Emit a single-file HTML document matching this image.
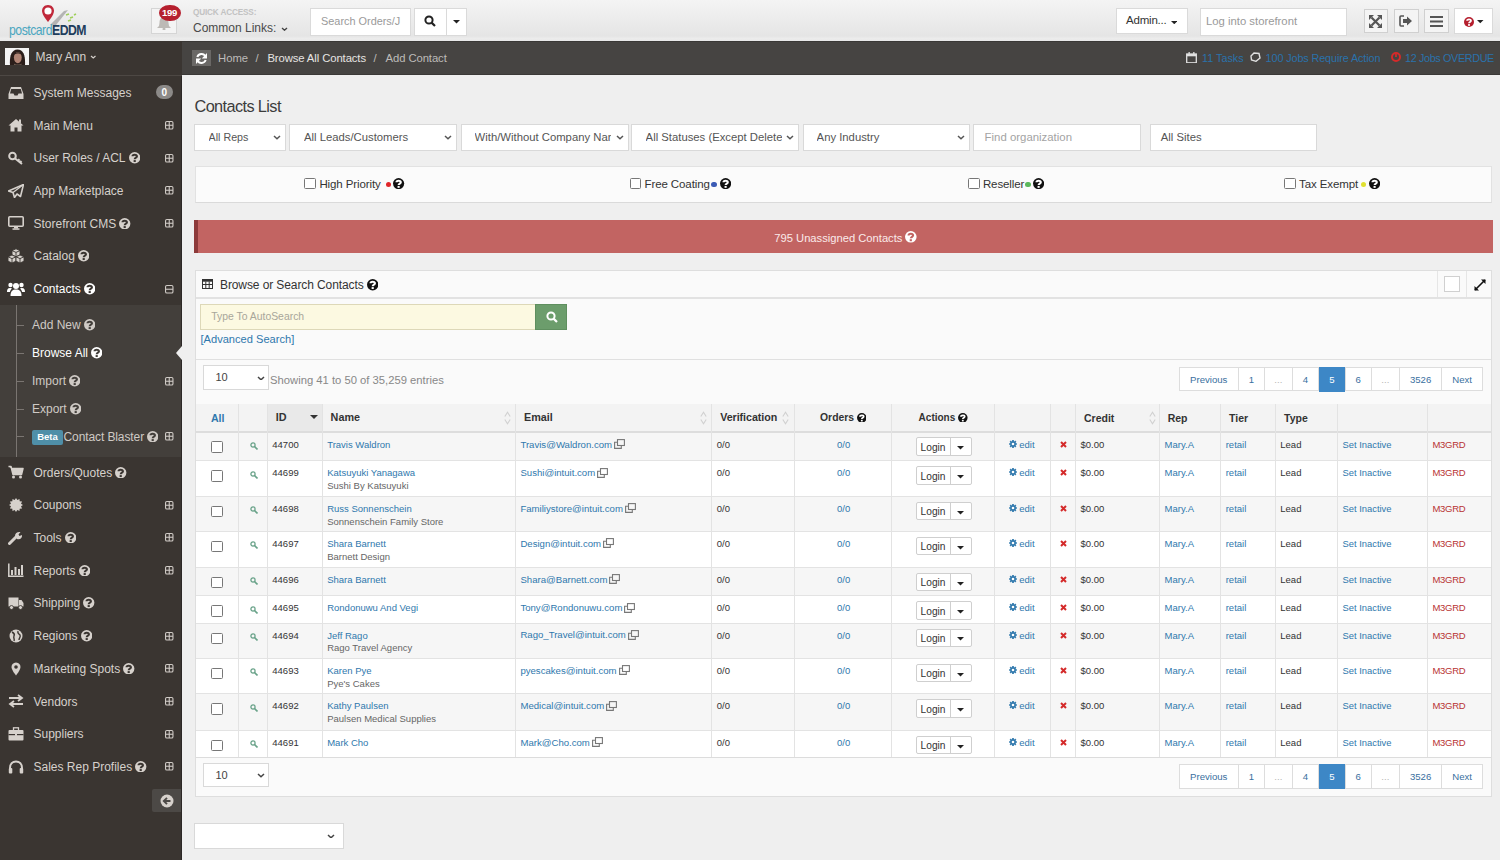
<!DOCTYPE html><html><head><meta charset="utf-8"><title>Contacts List</title><style>
html,body{margin:0;padding:0;width:1500px;height:860px;overflow:hidden;background:#efefef;font-family:"Liberation Sans", sans-serif;}
.t{position:absolute;line-height:1;white-space:nowrap;}
.r{position:absolute;box-sizing:border-box;}

</style></head><body>
<div class="r" style="left:0.00px;top:0.00px;width:1500.00px;height:40.70px;background:linear-gradient(#f4f4f4 0%,#e5e5e5 88%,#ececec 94%,#e8e8e8 100%);"></div>
<div class="r" style="left:0.00px;top:40.70px;width:181.50px;height:819.30px;background:#3a3531;"></div>
<div class="r" style="left:181.50px;top:40.70px;width:1318.50px;height:34.80px;background:#464442;border-top:1px solid #3a3836;border-bottom:1px solid #3b3937;"></div>
<svg class="r" style="left:40.00px;top:4.00px" width="16" height="20" viewBox="0 0 16 20"><path d="M8,1 C4,1 2,4 2,7 C2,11 8,18 8,18 C8,18 14,11 14,7 C14,4 12,1 8,1 Z" fill="#c0283a"/><circle cx="8" cy="7" r="3.6" fill="#fff"/></svg>
<svg class="r" style="left:48.00px;top:9.00px" width="30" height="17" viewBox="0 0 30 17"><path d="M2,16 L16,2 L20,1 L8,16 Z" fill="#a9a9a9" opacity="0.85"/><path d="M18,6 l3,-1 M22,9 l3,-1 M20,12 l3,-1 M26,6 l2,-1" stroke="#9fcf5a" stroke-width="1.6"/></svg>
<div class="t" style="left:9.00px;top:22.94px;font-size:14.6px;color:#333;font-weight:400;letter-spacing:-0.6px;transform:scaleX(0.84);transform-origin:0 0;"><span style="color:#4aa6c0">postcard</span><span style="color:#1e3d5c;font-weight:700">EDDM</span></div>
<div class="r" style="left:151.00px;top:8.00px;width:25.50px;height:25.50px;background:#f4f4f4;border:1px solid #d5d5d5;"></div>
<svg class="r" style="left:156.00px;top:16.00px" width="16" height="14" viewBox="0 0 16 14"><path d="M8,1 C4.5,1 3.5,4 3.5,7 L3,10 L1,12 L15,12 L13,10 L12.5,7 C12.5,4 11.5,1 8,1 Z" fill="#bdbab6"/><circle cx="8" cy="13" r="1.5" fill="#bdbab6"/></svg>
<div class="r" style="left:158.50px;top:4.50px;width:22.00px;height:16.50px;background:#b51f2e;border-radius:50%;"></div>
<div class="t" style="left:-130.50px;width:600px;text-align:center;top:8.46px;font-size:9.5px;color:#fff;font-weight:700;letter-spacing:-0.3px;">199</div>
<div class="t" style="left:193.00px;top:8.56px;font-size:8.2px;color:#c2c2c2;font-weight:700;letter-spacing:-0.15px;">QUICK ACCESS:</div>
<div class="t" style="left:193.00px;top:21.84px;font-size:12px;color:#4a4a4a;font-weight:400;letter-spacing:0px;">Common Links:</div>
<svg class="r" style="left:280.50px;top:27.00px" width="7" height="4.2" viewBox="0 0 7 4.2"><polyline points="1,1 3.5,3.2 6,1" fill="none" stroke="#444" stroke-width="1.4"/></svg>
<div class="r" style="left:310.00px;top:8.00px;width:100.50px;height:27.50px;background:#fff;border:1px solid #dadada;"></div>
<div class="t" style="left:321.00px;top:16.27px;font-size:10.9px;color:#9a9a9a;font-weight:400;letter-spacing:0px;">Search Orders/J</div>
<div class="r" style="left:413.50px;top:8.00px;width:53.00px;height:27.50px;background:#fff;border:1px solid #dadada;"></div>
<div class="r" style="left:445.50px;top:8.00px;width:1.00px;height:27.50px;background:#dadada;"></div>
<svg class="r" style="left:423.50px;top:15.00px" width="12" height="12" viewBox="0 0 12 12"><circle cx="5" cy="5" r="3.6" fill="none" stroke="#222" stroke-width="2"/><line x1="7.6" y1="7.6" x2="11" y2="11" stroke="#222" stroke-width="2.2"/></svg>
<svg class="r" style="left:452.50px;top:20.00px" width="7" height="4.0" viewBox="0 0 7 4.0"><polygon points="0,0 7,0 3.5,3.5" fill="#222"/></svg>
<div class="r" style="left:1115.50px;top:8.00px;width:72.00px;height:26.00px;background:#fff;border:1px solid #dadada;"></div>
<div class="t" style="left:1126.00px;top:15.26px;font-size:11.5px;color:#333;font-weight:400;letter-spacing:-0.2px;">Admin...</div>
<svg class="r" style="left:1170.50px;top:20.50px" width="6.5" height="3.75" viewBox="0 0 6.5 3.75"><polygon points="0,0 6.5,0 3.25,3.25" fill="#222"/></svg>
<div class="r" style="left:1199.50px;top:8.00px;width:147.00px;height:27.50px;background:#fff;border:1px solid #dadada;"></div>
<div class="t" style="left:1206.00px;top:16.43px;font-size:11.3px;color:#9a9a9a;font-weight:400;letter-spacing:0px;">Log into storefront</div>
<div class="r" style="left:1363.50px;top:8.50px;width:24.50px;height:24.50px;background:#f4f4f4;border:1px solid #d0d0d0;"></div>
<div class="r" style="left:1393.50px;top:8.50px;width:25.00px;height:24.50px;background:#f4f4f4;border:1px solid #d0d0d0;"></div>
<div class="r" style="left:1424.00px;top:8.50px;width:25.00px;height:24.50px;background:#f4f4f4;border:1px solid #d0d0d0;"></div>
<svg class="r" style="left:1369.00px;top:14.50px" width="13" height="13" viewBox="0 0 13 13"><path d="M2.5,2.5 L10.5,10.5 M10.5,2.5 L2.5,10.5" stroke="#555" stroke-width="2.2"/><polygon points="0,0 5,0 0,5" fill="#555"/><polygon points="13,0 8,0 13,5" fill="#555"/><polygon points="0,13 5,13 0,8" fill="#555"/><polygon points="13,13 8,13 13,8" fill="#555"/></svg>
<svg class="r" style="left:1399.00px;top:15.00px" width="14" height="12" viewBox="0 0 14 12"><path d="M5,1 L2,1 Q1,1 1,2 L1,10 Q1,11 2,11 L5,11" fill="none" stroke="#555" stroke-width="1.6"/><path d="M4,4 L8,4 L8,1.5 L13,6 L8,10.5 L8,8 L4,8 Z" fill="#555"/></svg>
<svg class="r" style="left:1430.00px;top:16.00px" width="13" height="11" viewBox="0 0 13 11"><rect x="0" y="0" width="13" height="2" fill="#555"/><rect x="0" y="4.5" width="13" height="2" fill="#555"/><rect x="0" y="9" width="13" height="2" fill="#555"/></svg>
<div class="r" style="left:1454.00px;top:8.00px;width:39.00px;height:26.00px;background:#fff;border:1px solid #dadada;"></div>
<svg class="r" style="left:1464.00px;top:16.50px" width="10" height="10" viewBox="0 0 10 10"><circle cx="5" cy="5" r="5" fill="#b51f2e"/><path d="M3.08,3.83 C3.08,2.00 7.00,1.83 7.00,3.75 C7.00,4.92 5.00,5.08 5.00,6.33" fill="none" stroke="#fff" stroke-width="1.80" stroke-linecap="butt"/><rect x="4.05" y="7.10" width="1.90" height="1.70" fill="#fff"/></svg>
<svg class="r" style="left:1477.00px;top:20.00px" width="6.5" height="3.75" viewBox="0 0 6.5 3.75"><polygon points="0,0 6.5,0 3.25,3.25" fill="#222"/></svg>
<div class="r" style="left:0.00px;top:74.50px;width:181.50px;height:1.00px;background:#4d4844;"></div>
<div class="r" style="left:5.00px;top:47.70px;width:24.00px;height:17.10px;background:#f4f4f4;"></div>
<svg class="r" style="left:5.00px;top:47.70px" width="24" height="17.1" viewBox="0 0 24 17.1"><path d="M5,17.1 C4.5,10 5.5,1.8 12.5,1.6 C19,1.8 20.5,9 20,17.1 Z" fill="#2b1e1a"/><ellipse cx="12.8" cy="9.6" rx="3.9" ry="5.6" fill="#b08474"/><path d="M9,15.5 C10,17 15.5,17 16.5,15.5 L16.5,17.1 L9,17.1 Z" fill="#6a5a50"/><path d="M8.8,7 C10,3.5 15.5,3.2 16.8,7 C15,5 11,5 8.8,7 Z" fill="#2b1e1a"/></svg>
<div class="t" style="left:35.50px;top:50.84px;font-size:12px;color:#d6d1cc;font-weight:400;letter-spacing:0px;">Mary Ann</div>
<svg class="r" style="left:90.00px;top:55.00px" width="6.5" height="3.9" viewBox="0 0 6.5 3.9"><polyline points="1,1 3.25,2.9 5.5,1" fill="none" stroke="#d6d1cc" stroke-width="1.2"/></svg>
<div class="r" style="left:0.00px;top:305.00px;width:181.50px;height:151.50px;background:#433f3b;"></div>
<div class="r" style="left:16.00px;top:305.00px;width:1.20px;height:151.50px;background:#7a7571;"></div>
<svg class="r" style="left:8.00px;top:85.50px" width="16" height="14" viewBox="0 0 16 14"><path d="M3,1 L13,1 L15.5,8 L15.5,13 L0.5,13 L0.5,8 Z" fill="#d6d1cc"/><path d="M3.2,3 L12.8,3 L14,7.5 L10.5,7.5 L9.5,9.5 L6.5,9.5 L5.5,7.5 L2,7.5 Z" fill="#3a3531"/></svg>
<div class="t" style="left:33.50px;top:86.84px;font-size:12px;color:#d6d1cc;font-weight:400;letter-spacing:0px;">System Messages</div>
<svg class="r" style="left:8.00px;top:118.20px" width="16" height="14" viewBox="0 0 16 14"><path d="M8,1 L15.5,7.5 L13.5,7.5 L13.5,13.5 L9.5,13.5 L9.5,9.5 L6.5,9.5 L6.5,13.5 L2.5,13.5 L2.5,7.5 L0.5,7.5 Z" fill="#d6d1cc"/><rect x="11" y="1.5" width="2" height="4" fill="#d6d1cc"/></svg>
<div class="t" style="left:33.50px;top:119.54px;font-size:12px;color:#d6d1cc;font-weight:400;letter-spacing:0px;">Main Menu</div>
<svg class="r" style="left:165.30px;top:120.90px" width="9" height="9" viewBox="0 0 9 9"><rect x="0.55" y="0.55" width="7.4" height="7.4" rx="1.3" fill="none" stroke="#cfcac5" stroke-width="1.1"/><line x1="0.55" y1="4.25" x2="7.95" y2="4.25" stroke="#cfcac5" stroke-width="1.1"/><line x1="4.25" y1="0.55" x2="4.25" y2="7.95" stroke="#cfcac5" stroke-width="1.1"/></svg>
<svg class="r" style="left:8.00px;top:151.00px" width="16" height="14" viewBox="0 0 16 14"><circle cx="4.5" cy="5" r="3.3" fill="none" stroke="#d6d1cc" stroke-width="2"/><path d="M6.8,7.3 L14,13 M10,9.8 L11.5,8.3 M12,11.5 L13.5,10" stroke="#d6d1cc" stroke-width="2"/></svg>
<div class="t" style="left:33.50px;top:152.34px;font-size:12px;color:#d6d1cc;font-weight:400;letter-spacing:0px;">User Roles / ACL<span style="display:inline-block;position:relative;width:14.40px;height:0"><svg style="position:absolute;left:3px;top:-10.00px" width="11.4" height="11.4" viewBox="0 0 11.4 11.4"><circle cx="5.7" cy="5.7" r="5.7" fill="#d6d1cc"/><path d="M3.52,4.37 C3.52,2.28 7.98,2.09 7.98,4.28 C7.98,5.61 5.70,5.79 5.70,7.22" fill="none" stroke="#3a3531" stroke-width="2.05" stroke-linecap="butt"/><rect x="4.62" y="8.09" width="2.17" height="1.94" fill="#3a3531"/></svg></span></div>
<svg class="r" style="left:165.30px;top:153.70px" width="9" height="9" viewBox="0 0 9 9"><rect x="0.55" y="0.55" width="7.4" height="7.4" rx="1.3" fill="none" stroke="#cfcac5" stroke-width="1.1"/><line x1="0.55" y1="4.25" x2="7.95" y2="4.25" stroke="#cfcac5" stroke-width="1.1"/><line x1="4.25" y1="0.55" x2="4.25" y2="7.95" stroke="#cfcac5" stroke-width="1.1"/></svg>
<svg class="r" style="left:8.00px;top:183.70px" width="16" height="14" viewBox="0 0 16 14"><path d="M15.5,0.5 L0.5,7 L5,8.5 L6.5,13.5 L9,10 L12.5,12.5 Z" fill="none" stroke="#d6d1cc" stroke-width="1.6" stroke-linejoin="round"/><path d="M5,8.5 L15.5,0.5" stroke="#d6d1cc" stroke-width="1.2"/></svg>
<div class="t" style="left:33.50px;top:185.04px;font-size:12px;color:#d6d1cc;font-weight:400;letter-spacing:0px;">App Marketplace</div>
<svg class="r" style="left:165.30px;top:186.40px" width="9" height="9" viewBox="0 0 9 9"><rect x="0.55" y="0.55" width="7.4" height="7.4" rx="1.3" fill="none" stroke="#cfcac5" stroke-width="1.1"/><line x1="0.55" y1="4.25" x2="7.95" y2="4.25" stroke="#cfcac5" stroke-width="1.1"/><line x1="4.25" y1="0.55" x2="4.25" y2="7.95" stroke="#cfcac5" stroke-width="1.1"/></svg>
<svg class="r" style="left:8.00px;top:216.40px" width="16" height="14" viewBox="0 0 16 14"><rect x="0.8" y="0.8" width="14.4" height="9.5" rx="1" fill="none" stroke="#d6d1cc" stroke-width="1.6"/><rect x="6" y="10.5" width="4" height="2" fill="#d6d1cc"/><rect x="4.5" y="12.3" width="7" height="1.5" fill="#d6d1cc"/></svg>
<div class="t" style="left:33.50px;top:217.74px;font-size:12px;color:#d6d1cc;font-weight:400;letter-spacing:0px;">Storefront CMS<span style="display:inline-block;position:relative;width:14.40px;height:0"><svg style="position:absolute;left:3px;top:-10.00px" width="11.4" height="11.4" viewBox="0 0 11.4 11.4"><circle cx="5.7" cy="5.7" r="5.7" fill="#d6d1cc"/><path d="M3.52,4.37 C3.52,2.28 7.98,2.09 7.98,4.28 C7.98,5.61 5.70,5.79 5.70,7.22" fill="none" stroke="#3a3531" stroke-width="2.05" stroke-linecap="butt"/><rect x="4.62" y="8.09" width="2.17" height="1.94" fill="#3a3531"/></svg></span></div>
<svg class="r" style="left:165.30px;top:219.10px" width="9" height="9" viewBox="0 0 9 9"><rect x="0.55" y="0.55" width="7.4" height="7.4" rx="1.3" fill="none" stroke="#cfcac5" stroke-width="1.1"/><line x1="0.55" y1="4.25" x2="7.95" y2="4.25" stroke="#cfcac5" stroke-width="1.1"/><line x1="4.25" y1="0.55" x2="4.25" y2="7.95" stroke="#cfcac5" stroke-width="1.1"/></svg>
<svg class="r" style="left:7.00px;top:248.10px" width="18" height="16" viewBox="0 0 18 16"><g stroke="#3a3531" stroke-width="0.9" stroke-linejoin="round"><path d="M9,0.8 L13,2.6 L13,7 L9,8.8 L5,7 L5,2.6 Z" fill="#d6d1cc"/><path d="M5,2.6 L9,4.4 L13,2.6 M9,4.4 L9,8.8" fill="none"/><path d="M5,7 L9,8.8 L9,13.2 L5,15 L1,13.2 L1,8.8 Z" fill="#d6d1cc"/><path d="M1,8.8 L5,10.6 L9,8.8 M5,10.6 L5,15" fill="none"/><path d="M13,7 L17,8.8 L17,13.2 L13,15 L9,13.2 L9,8.8 Z" fill="#d6d1cc"/><path d="M9,8.8 L13,10.6 L17,8.8 M13,10.6 L13,15" fill="none"/></g></svg>
<div class="t" style="left:33.50px;top:250.44px;font-size:12px;color:#d6d1cc;font-weight:400;letter-spacing:0px;">Catalog<span style="display:inline-block;position:relative;width:14.40px;height:0"><svg style="position:absolute;left:3px;top:-10.00px" width="11.4" height="11.4" viewBox="0 0 11.4 11.4"><circle cx="5.7" cy="5.7" r="5.7" fill="#d6d1cc"/><path d="M3.52,4.37 C3.52,2.28 7.98,2.09 7.98,4.28 C7.98,5.61 5.70,5.79 5.70,7.22" fill="none" stroke="#3a3531" stroke-width="2.05" stroke-linecap="butt"/><rect x="4.62" y="8.09" width="2.17" height="1.94" fill="#3a3531"/></svg></span></div>
<svg class="r" style="left:7.00px;top:280.80px" width="18" height="16" viewBox="0 0 18 16"><circle cx="9" cy="5" r="3" fill="#fff"/><path d="M3.5,15 C3.5,10 5.5,8.5 9,8.5 C12.5,8.5 14.5,10 14.5,15 Z" fill="#fff"/><circle cx="3.5" cy="4" r="2.2" fill="#fff"/><circle cx="14.5" cy="4" r="2.2" fill="#fff"/><path d="M0,11 C0,7.5 1.5,7 3.5,7 L5,7.5 C3.5,9 3,10 3,11 Z M18,11 C18,7.5 16.5,7 14.5,7 L13,7.5 C14.5,9 15,10 15,11 Z" fill="#fff"/></svg>
<div class="t" style="left:33.50px;top:283.14px;font-size:12px;color:#ffffff;font-weight:400;letter-spacing:0px;">Contacts<span style="display:inline-block;position:relative;width:14.40px;height:0"><svg style="position:absolute;left:3px;top:-10.00px" width="11.4" height="11.4" viewBox="0 0 11.4 11.4"><circle cx="5.7" cy="5.7" r="5.7" fill="#ffffff"/><path d="M3.52,4.37 C3.52,2.28 7.98,2.09 7.98,4.28 C7.98,5.61 5.70,5.79 5.70,7.22" fill="none" stroke="#3a3531" stroke-width="2.05" stroke-linecap="butt"/><rect x="4.62" y="8.09" width="2.17" height="1.94" fill="#3a3531"/></svg></span></div>
<svg class="r" style="left:165.30px;top:284.50px" width="9" height="9" viewBox="0 0 9 9"><rect x="0.55" y="0.55" width="7.4" height="7.4" rx="1.3" fill="none" stroke="#cfcac5" stroke-width="1.1"/><line x1="0.55" y1="4.25" x2="7.95" y2="4.25" stroke="#cfcac5" stroke-width="1.1"/></svg>
<svg class="r" style="left:8.00px;top:465.30px" width="16" height="14" viewBox="0 0 16 14"><path d="M0.5,1.5 L3,1.5 L5,9.5 L13.5,9.5 L15,3.5 L4,3.5" fill="#d6d1cc" stroke="#d6d1cc" stroke-width="1.5" stroke-linejoin="round"/><circle cx="5.5" cy="12" r="1.5" fill="#d6d1cc"/><circle cx="12.5" cy="12" r="1.5" fill="#d6d1cc"/></svg>
<div class="t" style="left:33.50px;top:466.64px;font-size:12px;color:#d6d1cc;font-weight:400;letter-spacing:0px;">Orders/Quotes<span style="display:inline-block;position:relative;width:14.40px;height:0"><svg style="position:absolute;left:3px;top:-10.00px" width="11.4" height="11.4" viewBox="0 0 11.4 11.4"><circle cx="5.7" cy="5.7" r="5.7" fill="#d6d1cc"/><path d="M3.52,4.37 C3.52,2.28 7.98,2.09 7.98,4.28 C7.98,5.61 5.70,5.79 5.70,7.22" fill="none" stroke="#3a3531" stroke-width="2.05" stroke-linecap="butt"/><rect x="4.62" y="8.09" width="2.17" height="1.94" fill="#3a3531"/></svg></span></div>
<svg class="r" style="left:8.00px;top:498.00px" width="16" height="14" viewBox="0 0 16 14"><polygon points="15.00,7.00 13.02,8.35 14.06,10.50 11.68,10.68 11.50,13.06 9.35,12.02 8.00,14.00 6.65,12.02 4.50,13.06 4.32,10.68 1.94,10.50 2.98,8.35 1.00,7.00 2.98,5.65 1.94,3.50 4.32,3.32 4.50,0.94 6.65,1.98 8.00,0.00 9.35,1.98 11.50,0.94 11.68,3.32 14.06,3.50 13.02,5.65" fill="#d6d1cc"/></svg>
<div class="t" style="left:33.50px;top:499.34px;font-size:12px;color:#d6d1cc;font-weight:400;letter-spacing:0px;">Coupons</div>
<svg class="r" style="left:165.30px;top:500.70px" width="9" height="9" viewBox="0 0 9 9"><rect x="0.55" y="0.55" width="7.4" height="7.4" rx="1.3" fill="none" stroke="#cfcac5" stroke-width="1.1"/><line x1="0.55" y1="4.25" x2="7.95" y2="4.25" stroke="#cfcac5" stroke-width="1.1"/><line x1="4.25" y1="0.55" x2="4.25" y2="7.95" stroke="#cfcac5" stroke-width="1.1"/></svg>
<svg class="r" style="left:8.00px;top:530.70px" width="16" height="14" viewBox="0 0 16 14"><path d="M1.5,12.5 L8,6" stroke="#d6d1cc" stroke-width="3" stroke-linecap="round"/><path d="M7,5 C7,2 9.5,0.5 12.5,1 L10.5,3.5 L11.5,5 L14,4 C14.5,7 12,9 9,8 Z" fill="#d6d1cc"/></svg>
<div class="t" style="left:33.50px;top:532.04px;font-size:12px;color:#d6d1cc;font-weight:400;letter-spacing:0px;">Tools<span style="display:inline-block;position:relative;width:14.40px;height:0"><svg style="position:absolute;left:3px;top:-10.00px" width="11.4" height="11.4" viewBox="0 0 11.4 11.4"><circle cx="5.7" cy="5.7" r="5.7" fill="#d6d1cc"/><path d="M3.52,4.37 C3.52,2.28 7.98,2.09 7.98,4.28 C7.98,5.61 5.70,5.79 5.70,7.22" fill="none" stroke="#3a3531" stroke-width="2.05" stroke-linecap="butt"/><rect x="4.62" y="8.09" width="2.17" height="1.94" fill="#3a3531"/></svg></span></div>
<svg class="r" style="left:165.30px;top:533.40px" width="9" height="9" viewBox="0 0 9 9"><rect x="0.55" y="0.55" width="7.4" height="7.4" rx="1.3" fill="none" stroke="#cfcac5" stroke-width="1.1"/><line x1="0.55" y1="4.25" x2="7.95" y2="4.25" stroke="#cfcac5" stroke-width="1.1"/><line x1="4.25" y1="0.55" x2="4.25" y2="7.95" stroke="#cfcac5" stroke-width="1.1"/></svg>
<svg class="r" style="left:8.00px;top:563.40px" width="16" height="14" viewBox="0 0 16 14"><path d="M0.8,0.5 L0.8,13.2 L15.5,13.2" fill="none" stroke="#d6d1cc" stroke-width="1.5"/><rect x="3" y="7" width="2" height="5" fill="#d6d1cc"/><rect x="6.5" y="4" width="2" height="8" fill="#d6d1cc"/><rect x="10" y="6" width="2" height="6" fill="#d6d1cc"/><rect x="13" y="2" width="2" height="10" fill="#d6d1cc"/></svg>
<div class="t" style="left:33.50px;top:564.74px;font-size:12px;color:#d6d1cc;font-weight:400;letter-spacing:0px;">Reports<span style="display:inline-block;position:relative;width:14.40px;height:0"><svg style="position:absolute;left:3px;top:-10.00px" width="11.4" height="11.4" viewBox="0 0 11.4 11.4"><circle cx="5.7" cy="5.7" r="5.7" fill="#d6d1cc"/><path d="M3.52,4.37 C3.52,2.28 7.98,2.09 7.98,4.28 C7.98,5.61 5.70,5.79 5.70,7.22" fill="none" stroke="#3a3531" stroke-width="2.05" stroke-linecap="butt"/><rect x="4.62" y="8.09" width="2.17" height="1.94" fill="#3a3531"/></svg></span></div>
<svg class="r" style="left:165.30px;top:566.10px" width="9" height="9" viewBox="0 0 9 9"><rect x="0.55" y="0.55" width="7.4" height="7.4" rx="1.3" fill="none" stroke="#cfcac5" stroke-width="1.1"/><line x1="0.55" y1="4.25" x2="7.95" y2="4.25" stroke="#cfcac5" stroke-width="1.1"/><line x1="4.25" y1="0.55" x2="4.25" y2="7.95" stroke="#cfcac5" stroke-width="1.1"/></svg>
<svg class="r" style="left:8.00px;top:596.10px" width="16" height="14" viewBox="0 0 16 14"><rect x="0.5" y="1.5" width="10" height="9" fill="#d6d1cc"/><path d="M11,4 L13.5,4 L15.5,7 L15.5,10.5 L11,10.5 Z" fill="#d6d1cc"/><circle cx="3.5" cy="11.5" r="2" fill="#d6d1cc" stroke="#3a3531" stroke-width="0.8"/><circle cx="12.5" cy="11.5" r="2" fill="#d6d1cc" stroke="#3a3531" stroke-width="0.8"/></svg>
<div class="t" style="left:33.50px;top:597.44px;font-size:12px;color:#d6d1cc;font-weight:400;letter-spacing:0px;">Shipping<span style="display:inline-block;position:relative;width:14.40px;height:0"><svg style="position:absolute;left:3px;top:-10.00px" width="11.4" height="11.4" viewBox="0 0 11.4 11.4"><circle cx="5.7" cy="5.7" r="5.7" fill="#d6d1cc"/><path d="M3.52,4.37 C3.52,2.28 7.98,2.09 7.98,4.28 C7.98,5.61 5.70,5.79 5.70,7.22" fill="none" stroke="#3a3531" stroke-width="2.05" stroke-linecap="butt"/><rect x="4.62" y="8.09" width="2.17" height="1.94" fill="#3a3531"/></svg></span></div>
<svg class="r" style="left:8.00px;top:628.80px" width="16" height="14" viewBox="0 0 16 14"><circle cx="8" cy="7" r="6.5" fill="#d6d1cc"/><path d="M4,3 C6,4 7,5 6,7 C5,9 7,10 6,12 M10,2 C9,4 11,5 12,6 C13,8 11,9 11,11" stroke="#3a3531" stroke-width="1.4" fill="none"/></svg>
<div class="t" style="left:33.50px;top:630.14px;font-size:12px;color:#d6d1cc;font-weight:400;letter-spacing:0px;">Regions<span style="display:inline-block;position:relative;width:14.40px;height:0"><svg style="position:absolute;left:3px;top:-10.00px" width="11.4" height="11.4" viewBox="0 0 11.4 11.4"><circle cx="5.7" cy="5.7" r="5.7" fill="#d6d1cc"/><path d="M3.52,4.37 C3.52,2.28 7.98,2.09 7.98,4.28 C7.98,5.61 5.70,5.79 5.70,7.22" fill="none" stroke="#3a3531" stroke-width="2.05" stroke-linecap="butt"/><rect x="4.62" y="8.09" width="2.17" height="1.94" fill="#3a3531"/></svg></span></div>
<svg class="r" style="left:165.30px;top:631.50px" width="9" height="9" viewBox="0 0 9 9"><rect x="0.55" y="0.55" width="7.4" height="7.4" rx="1.3" fill="none" stroke="#cfcac5" stroke-width="1.1"/><line x1="0.55" y1="4.25" x2="7.95" y2="4.25" stroke="#cfcac5" stroke-width="1.1"/><line x1="4.25" y1="0.55" x2="4.25" y2="7.95" stroke="#cfcac5" stroke-width="1.1"/></svg>
<svg class="r" style="left:8.00px;top:661.50px" width="16" height="14" viewBox="0 0 16 14"><path d="M8,0.5 C5,0.5 3.5,2.7 3.5,5 C3.5,8 8,13.5 8,13.5 C8,13.5 12.5,8 12.5,5 C12.5,2.7 11,0.5 8,0.5 Z" fill="#d6d1cc"/><circle cx="8" cy="5" r="1.8" fill="#3a3531"/></svg>
<div class="t" style="left:33.50px;top:662.84px;font-size:12px;color:#d6d1cc;font-weight:400;letter-spacing:0px;">Marketing Spots<span style="display:inline-block;position:relative;width:14.40px;height:0"><svg style="position:absolute;left:3px;top:-10.00px" width="11.4" height="11.4" viewBox="0 0 11.4 11.4"><circle cx="5.7" cy="5.7" r="5.7" fill="#d6d1cc"/><path d="M3.52,4.37 C3.52,2.28 7.98,2.09 7.98,4.28 C7.98,5.61 5.70,5.79 5.70,7.22" fill="none" stroke="#3a3531" stroke-width="2.05" stroke-linecap="butt"/><rect x="4.62" y="8.09" width="2.17" height="1.94" fill="#3a3531"/></svg></span></div>
<svg class="r" style="left:165.30px;top:664.20px" width="9" height="9" viewBox="0 0 9 9"><rect x="0.55" y="0.55" width="7.4" height="7.4" rx="1.3" fill="none" stroke="#cfcac5" stroke-width="1.1"/><line x1="0.55" y1="4.25" x2="7.95" y2="4.25" stroke="#cfcac5" stroke-width="1.1"/><line x1="4.25" y1="0.55" x2="4.25" y2="7.95" stroke="#cfcac5" stroke-width="1.1"/></svg>
<svg class="r" style="left:8.00px;top:694.20px" width="16" height="14" viewBox="0 0 16 14"><path d="M1,4 L13,4 M10,1 L14,4 L10,7 M15,10 L3,10 M6,7 L2,10 L6,13" fill="none" stroke="#d6d1cc" stroke-width="1.8"/></svg>
<div class="t" style="left:33.50px;top:695.54px;font-size:12px;color:#d6d1cc;font-weight:400;letter-spacing:0px;">Vendors</div>
<svg class="r" style="left:165.30px;top:696.90px" width="9" height="9" viewBox="0 0 9 9"><rect x="0.55" y="0.55" width="7.4" height="7.4" rx="1.3" fill="none" stroke="#cfcac5" stroke-width="1.1"/><line x1="0.55" y1="4.25" x2="7.95" y2="4.25" stroke="#cfcac5" stroke-width="1.1"/><line x1="4.25" y1="0.55" x2="4.25" y2="7.95" stroke="#cfcac5" stroke-width="1.1"/></svg>
<svg class="r" style="left:8.00px;top:726.90px" width="16" height="14" viewBox="0 0 16 14"><rect x="0.5" y="3" width="15" height="10.5" rx="1" fill="#d6d1cc"/><rect x="5.5" y="0.8" width="5" height="3" fill="none" stroke="#d6d1cc" stroke-width="1.3"/><rect x="0.5" y="7" width="15" height="1.2" fill="#3a3531"/><rect x="7" y="6.3" width="2" height="2.6" fill="#d6d1cc"/></svg>
<div class="t" style="left:33.50px;top:728.24px;font-size:12px;color:#d6d1cc;font-weight:400;letter-spacing:0px;">Suppliers</div>
<svg class="r" style="left:165.30px;top:729.60px" width="9" height="9" viewBox="0 0 9 9"><rect x="0.55" y="0.55" width="7.4" height="7.4" rx="1.3" fill="none" stroke="#cfcac5" stroke-width="1.1"/><line x1="0.55" y1="4.25" x2="7.95" y2="4.25" stroke="#cfcac5" stroke-width="1.1"/><line x1="4.25" y1="0.55" x2="4.25" y2="7.95" stroke="#cfcac5" stroke-width="1.1"/></svg>
<svg class="r" style="left:8.00px;top:759.60px" width="16" height="14" viewBox="0 0 16 14"><path d="M2,11 L2,8 C2,4 4.5,1.5 8,1.5 C11.5,1.5 14,4 14,8 L14,11" fill="none" stroke="#d6d1cc" stroke-width="2"/><rect x="0.8" y="8" width="3.5" height="5.5" rx="1" fill="#d6d1cc"/><rect x="11.7" y="8" width="3.5" height="5.5" rx="1" fill="#d6d1cc"/></svg>
<div class="t" style="left:33.50px;top:760.94px;font-size:12px;color:#d6d1cc;font-weight:400;letter-spacing:0px;">Sales Rep Profiles<span style="display:inline-block;position:relative;width:14.40px;height:0"><svg style="position:absolute;left:3px;top:-10.00px" width="11.4" height="11.4" viewBox="0 0 11.4 11.4"><circle cx="5.7" cy="5.7" r="5.7" fill="#d6d1cc"/><path d="M3.52,4.37 C3.52,2.28 7.98,2.09 7.98,4.28 C7.98,5.61 5.70,5.79 5.70,7.22" fill="none" stroke="#3a3531" stroke-width="2.05" stroke-linecap="butt"/><rect x="4.62" y="8.09" width="2.17" height="1.94" fill="#3a3531"/></svg></span></div>
<svg class="r" style="left:165.30px;top:762.30px" width="9" height="9" viewBox="0 0 9 9"><rect x="0.55" y="0.55" width="7.4" height="7.4" rx="1.3" fill="none" stroke="#cfcac5" stroke-width="1.1"/><line x1="0.55" y1="4.25" x2="7.95" y2="4.25" stroke="#cfcac5" stroke-width="1.1"/><line x1="4.25" y1="0.55" x2="4.25" y2="7.95" stroke="#cfcac5" stroke-width="1.1"/></svg>
<div class="r" style="left:155.50px;top:84.50px;width:17.50px;height:14.50px;background:#8c8a88;border-radius:8px;"></div>
<div class="t" style="left:-135.75px;width:600px;text-align:center;top:87.83px;font-size:10px;color:#fff;font-weight:700;letter-spacing:0px;">0</div>
<div class="r" style="left:17.00px;top:324.80px;width:6.50px;height:1.00px;background:#7a7571;"></div>
<div class="t" style="left:32.00px;top:319.44px;font-size:12px;color:#cfcac5;font-weight:400;letter-spacing:0px;">Add New<span style="display:inline-block;position:relative;width:14.40px;height:0"><svg style="position:absolute;left:3px;top:-10.00px" width="11.4" height="11.4" viewBox="0 0 11.4 11.4"><circle cx="5.7" cy="5.7" r="5.7" fill="#cfcac5"/><path d="M3.52,4.37 C3.52,2.28 7.98,2.09 7.98,4.28 C7.98,5.61 5.70,5.79 5.70,7.22" fill="none" stroke="#433f3b" stroke-width="2.05" stroke-linecap="butt"/><rect x="4.62" y="8.09" width="2.17" height="1.94" fill="#433f3b"/></svg></span></div>
<div class="r" style="left:17.00px;top:352.70px;width:6.50px;height:1.00px;background:#7a7571;"></div>
<div class="t" style="left:32.00px;top:347.34px;font-size:12px;color:#ffffff;font-weight:400;letter-spacing:0px;">Browse All<span style="display:inline-block;position:relative;width:14.40px;height:0"><svg style="position:absolute;left:3px;top:-10.00px" width="11.4" height="11.4" viewBox="0 0 11.4 11.4"><circle cx="5.7" cy="5.7" r="5.7" fill="#ffffff"/><path d="M3.52,4.37 C3.52,2.28 7.98,2.09 7.98,4.28 C7.98,5.61 5.70,5.79 5.70,7.22" fill="none" stroke="#433f3b" stroke-width="2.05" stroke-linecap="butt"/><rect x="4.62" y="8.09" width="2.17" height="1.94" fill="#433f3b"/></svg></span></div>
<div class="r" style="left:17.00px;top:380.60px;width:6.50px;height:1.00px;background:#7a7571;"></div>
<div class="t" style="left:32.00px;top:375.24px;font-size:12px;color:#cfcac5;font-weight:400;letter-spacing:0px;">Import<span style="display:inline-block;position:relative;width:14.40px;height:0"><svg style="position:absolute;left:3px;top:-10.00px" width="11.4" height="11.4" viewBox="0 0 11.4 11.4"><circle cx="5.7" cy="5.7" r="5.7" fill="#cfcac5"/><path d="M3.52,4.37 C3.52,2.28 7.98,2.09 7.98,4.28 C7.98,5.61 5.70,5.79 5.70,7.22" fill="none" stroke="#433f3b" stroke-width="2.05" stroke-linecap="butt"/><rect x="4.62" y="8.09" width="2.17" height="1.94" fill="#433f3b"/></svg></span></div>
<svg class="r" style="left:165.30px;top:376.60px" width="9" height="9" viewBox="0 0 9 9"><rect x="0.55" y="0.55" width="7.4" height="7.4" rx="1.3" fill="none" stroke="#cfcac5" stroke-width="1.1"/><line x1="0.55" y1="4.25" x2="7.95" y2="4.25" stroke="#cfcac5" stroke-width="1.1"/><line x1="4.25" y1="0.55" x2="4.25" y2="7.95" stroke="#cfcac5" stroke-width="1.1"/></svg>
<div class="r" style="left:17.00px;top:408.50px;width:6.50px;height:1.00px;background:#7a7571;"></div>
<div class="t" style="left:32.00px;top:403.14px;font-size:12px;color:#cfcac5;font-weight:400;letter-spacing:0px;">Export<span style="display:inline-block;position:relative;width:14.40px;height:0"><svg style="position:absolute;left:3px;top:-10.00px" width="11.4" height="11.4" viewBox="0 0 11.4 11.4"><circle cx="5.7" cy="5.7" r="5.7" fill="#cfcac5"/><path d="M3.52,4.37 C3.52,2.28 7.98,2.09 7.98,4.28 C7.98,5.61 5.70,5.79 5.70,7.22" fill="none" stroke="#433f3b" stroke-width="2.05" stroke-linecap="butt"/><rect x="4.62" y="8.09" width="2.17" height="1.94" fill="#433f3b"/></svg></span></div>
<div class="r" style="left:17.00px;top:436.40px;width:6.50px;height:1.00px;background:#7a7571;"></div>
<div class="r" style="left:32.00px;top:429.60px;width:31.00px;height:15.80px;background:#4f8fa8;border-radius:2px;"></div>
<div class="t" style="left:-252.50px;width:600px;text-align:center;top:432.46px;font-size:9.5px;color:#fff;font-weight:700;letter-spacing:0px;">Beta</div>
<div class="t" style="left:63.50px;top:431.04px;font-size:12px;color:#cfcac5;font-weight:400;letter-spacing:-0.1px;">Contact Blaster<span style="display:inline-block;position:relative;width:14.40px;height:0"><svg style="position:absolute;left:3px;top:-10.00px" width="11.4" height="11.4" viewBox="0 0 11.4 11.4"><circle cx="5.7" cy="5.7" r="5.7" fill="#cfcac5"/><path d="M3.52,4.37 C3.52,2.28 7.98,2.09 7.98,4.28 C7.98,5.61 5.70,5.79 5.70,7.22" fill="none" stroke="#433f3b" stroke-width="2.05" stroke-linecap="butt"/><rect x="4.62" y="8.09" width="2.17" height="1.94" fill="#433f3b"/></svg></span></div>
<svg class="r" style="left:165.30px;top:432.40px" width="9" height="9" viewBox="0 0 9 9"><rect x="0.55" y="0.55" width="7.4" height="7.4" rx="1.3" fill="none" stroke="#cfcac5" stroke-width="1.1"/><line x1="0.55" y1="4.25" x2="7.95" y2="4.25" stroke="#cfcac5" stroke-width="1.1"/><line x1="4.25" y1="0.55" x2="4.25" y2="7.95" stroke="#cfcac5" stroke-width="1.1"/></svg>
<div class="r" style="left:152.00px;top:789.00px;width:29.50px;height:22.50px;background:#4c4946;border-radius:2px 0 0 2px;"></div>
<svg class="r" style="left:159.50px;top:793.50px" width="14" height="14" viewBox="0 0 14 14"><circle cx="7" cy="7" r="6.5" fill="#d6d1cc"/><path d="M10.5,7 L4,7 M7,3.8 L3.8,7 L7,10.2" fill="none" stroke="#4c4946" stroke-width="1.9"/></svg>
<div class="r" style="left:180.50px;top:75.50px;width:1.00px;height:784.50px;background:#2c2826;"></div>
<svg class="r" style="left:175.50px;top:346.00px" width="6" height="14" viewBox="0 0 6 14"><polygon points="6,0 0,7 6,14" fill="#efefef"/></svg>
<div class="r" style="left:192.00px;top:49.50px;width:19.00px;height:16.50px;background:#6a6866;"></div>
<svg class="r" style="left:195.00px;top:51.50px" width="13" height="13" viewBox="0 0 13 13"><path d="M10.5,4.5 A4.5,4.5 0 0 0 2.3,5" fill="none" stroke="#fff" stroke-width="2"/><polygon points="12,1 12,6.5 6.8,6.5" fill="#fff"/><path d="M2.5,8.5 A4.5,4.5 0 0 0 10.7,8" fill="none" stroke="#fff" stroke-width="2"/><polygon points="1,12 1,6.5 6.2,6.5" fill="#fff"/></svg>
<div class="t" style="left:218.00px;top:52.83px;font-size:11.3px;color:#bdbbb9;font-weight:400;letter-spacing:0px;">Home</div>
<div class="t" style="left:255.50px;top:52.83px;font-size:11.3px;color:#bdbbb9;font-weight:400;letter-spacing:0px;">/</div>
<div class="t" style="left:267.40px;top:52.83px;font-size:11.3px;color:#e6e4e2;font-weight:400;letter-spacing:-0.1px;">Browse All Contacts</div>
<div class="t" style="left:373.50px;top:52.83px;font-size:11.3px;color:#bdbbb9;font-weight:400;letter-spacing:0px;">/</div>
<div class="t" style="left:385.60px;top:52.83px;font-size:11.3px;color:#bdbbb9;font-weight:400;letter-spacing:-0.1px;">Add Contact</div>
<svg class="r" style="left:1186.00px;top:51.50px" width="11" height="11.5" viewBox="0 0 11 11.5"><rect x="0.7" y="2" width="9.6" height="8.8" fill="none" stroke="#e0e0e0" stroke-width="1.3"/><rect x="0.7" y="2" width="9.6" height="2.3" fill="#e0e0e0"/><rect x="2.5" y="0" width="1.3" height="3" fill="#e0e0e0"/><rect x="7.2" y="0" width="1.3" height="3" fill="#e0e0e0"/></svg>
<div class="t" style="left:1202.00px;top:52.86px;font-size:10.8px;color:#2a72ab;font-weight:400;letter-spacing:0px;">11 Tasks</div>
<svg class="r" style="left:1249.50px;top:52.00px" width="11" height="10" viewBox="0 0 11 10"><path d="M1,4 L4,1 L9,1.5 L10,6 L6,9.3 L1.5,8 Z" fill="none" stroke="#e0e0e0" stroke-width="1.4"/></svg>
<div class="t" style="left:1265.60px;top:52.86px;font-size:10.8px;color:#2a72ab;font-weight:400;letter-spacing:-0.1px;">100 Jobs Require Action</div>
<svg class="r" style="left:1390.50px;top:52.00px" width="10" height="10" viewBox="0 0 10 10"><circle cx="5" cy="5" r="4" fill="none" stroke="#d42a2a" stroke-width="2"/><rect x="4.1" y="0" width="1.8" height="5" fill="#d42a2a"/></svg>
<div class="t" style="left:1405.00px;top:52.86px;font-size:10.8px;color:#2a72ab;font-weight:400;letter-spacing:-0.35px;">12 Jobs OVERDUE</div>
<div class="t" style="left:194.50px;top:98.20px;font-size:16.3px;color:#3c3c3c;font-weight:400;letter-spacing:-0.6px;">Contacts List</div>
<div class="r" style="left:194.40px;top:124.00px;width:92.00px;height:26.50px;background:#fff;border:1px solid #d9d9d9;"></div>
<div class="t" style="left:208.60px;top:132.44px;font-size:10.7px;color:#555;font-weight:400;letter-spacing:0px;width:60.30px;overflow:hidden;">All Reps</div>
<svg class="r" style="left:273.40px;top:134.80px" width="8" height="4.8" viewBox="0 0 8 4.8"><polyline points="1,1 4.0,3.8 7,1" fill="none" stroke="#555" stroke-width="1.5"/></svg>
<div class="r" style="left:289.40px;top:124.00px;width:167.20px;height:26.50px;background:#fff;border:1px solid #d9d9d9;"></div>
<div class="t" style="left:304.00px;top:131.93px;font-size:11.3px;color:#555;font-weight:400;letter-spacing:0px;width:135.10px;overflow:hidden;">All Leads/Customers</div>
<svg class="r" style="left:443.60px;top:134.80px" width="8" height="4.8" viewBox="0 0 8 4.8"><polyline points="1,1 4.0,3.8 7,1" fill="none" stroke="#555" stroke-width="1.5"/></svg>
<div class="r" style="left:460.60px;top:124.00px;width:168.00px;height:26.50px;background:#fff;border:1px solid #d9d9d9;"></div>
<div class="t" style="left:474.60px;top:131.93px;font-size:11.3px;color:#555;font-weight:400;letter-spacing:0px;width:136.50px;overflow:hidden;">With/Without Company Name</div>
<svg class="r" style="left:615.60px;top:134.80px" width="8" height="4.8" viewBox="0 0 8 4.8"><polyline points="1,1 4.0,3.8 7,1" fill="none" stroke="#555" stroke-width="1.5"/></svg>
<div class="r" style="left:631.40px;top:124.00px;width:167.70px;height:26.50px;background:#fff;border:1px solid #d9d9d9;"></div>
<div class="t" style="left:645.60px;top:131.93px;font-size:11.3px;color:#555;font-weight:400;letter-spacing:0px;width:136.00px;overflow:hidden;">All Statuses (Except Deletec</div>
<svg class="r" style="left:786.10px;top:134.80px" width="8" height="4.8" viewBox="0 0 8 4.8"><polyline points="1,1 4.0,3.8 7,1" fill="none" stroke="#555" stroke-width="1.5"/></svg>
<div class="r" style="left:802.70px;top:124.00px;width:167.70px;height:26.50px;background:#fff;border:1px solid #d9d9d9;"></div>
<div class="t" style="left:816.60px;top:131.93px;font-size:11.3px;color:#555;font-weight:400;letter-spacing:0px;width:136.30px;overflow:hidden;">Any Industry</div>
<svg class="r" style="left:957.40px;top:134.80px" width="8" height="4.8" viewBox="0 0 8 4.8"><polyline points="1,1 4.0,3.8 7,1" fill="none" stroke="#555" stroke-width="1.5"/></svg>
<div class="r" style="left:973.40px;top:124.00px;width:167.80px;height:26.50px;background:#fff;border:1px solid #d9d9d9;"></div>
<div class="t" style="left:984.60px;top:131.85px;font-size:11.4px;color:#a3a3a3;font-weight:400;letter-spacing:0px;">Find organization</div>
<div class="r" style="left:1149.70px;top:124.00px;width:167.80px;height:26.50px;background:#fff;border:1px solid #d9d9d9;"></div>
<div class="t" style="left:1160.80px;top:131.93px;font-size:11.3px;color:#555;font-weight:400;letter-spacing:0px;">All Sites</div>
<div class="r" style="left:194.60px;top:166.00px;width:1297.00px;height:37.00px;background:#fbfbfb;border:1px solid #e2e2e2;border-bottom-color:#dadada;"></div>
<div class="r" style="left:304.40px;top:177.60px;width:11.60px;height:11.60px;border:1.5px solid #777;border-radius:1.5px;background:#fff;"></div>
<div class="t" style="left:319.40px;top:178.56px;font-size:11.5px;color:#333;font-weight:400;letter-spacing:-0.1px;">High Priority</div>
<div class="r" style="left:385.50px;top:181.50px;width:5.60px;height:5.60px;background:#e0262a;border-radius:50%;"></div>
<svg class="r" style="left:393.40px;top:177.70px" width="11.2" height="11.2" viewBox="0 0 11.2 11.2"><circle cx="5.6" cy="5.6" r="5.6" fill="#111"/><path d="M3.45,4.29 C3.45,2.24 7.84,2.05 7.84,4.20 C7.84,5.51 5.60,5.69 5.60,7.09" fill="none" stroke="#fff" stroke-width="2.02" stroke-linecap="butt"/><rect x="4.54" y="7.95" width="2.13" height="1.90" fill="#fff"/></svg>
<div class="r" style="left:629.80px;top:177.60px;width:11.60px;height:11.60px;border:1.5px solid #777;border-radius:1.5px;background:#fff;"></div>
<div class="t" style="left:644.50px;top:178.56px;font-size:11.5px;color:#333;font-weight:400;letter-spacing:-0.1px;">Free Coating</div>
<div class="r" style="left:711.40px;top:181.50px;width:5.60px;height:5.60px;background:#3b5bb5;border-radius:50%;"></div>
<svg class="r" style="left:720.10px;top:177.70px" width="11.2" height="11.2" viewBox="0 0 11.2 11.2"><circle cx="5.6" cy="5.6" r="5.6" fill="#111"/><path d="M3.45,4.29 C3.45,2.24 7.84,2.05 7.84,4.20 C7.84,5.51 5.60,5.69 5.60,7.09" fill="none" stroke="#fff" stroke-width="2.02" stroke-linecap="butt"/><rect x="4.54" y="7.95" width="2.13" height="1.90" fill="#fff"/></svg>
<div class="r" style="left:968.20px;top:177.60px;width:11.60px;height:11.60px;border:1.5px solid #777;border-radius:1.5px;background:#fff;"></div>
<div class="t" style="left:982.90px;top:178.56px;font-size:11.5px;color:#333;font-weight:400;letter-spacing:-0.1px;">Reseller</div>
<div class="r" style="left:1025.20px;top:181.50px;width:5.60px;height:5.60px;background:#5cb85c;border-radius:50%;"></div>
<svg class="r" style="left:1032.90px;top:177.70px" width="11.2" height="11.2" viewBox="0 0 11.2 11.2"><circle cx="5.6" cy="5.6" r="5.6" fill="#111"/><path d="M3.45,4.29 C3.45,2.24 7.84,2.05 7.84,4.20 C7.84,5.51 5.60,5.69 5.60,7.09" fill="none" stroke="#fff" stroke-width="2.02" stroke-linecap="butt"/><rect x="4.54" y="7.95" width="2.13" height="1.90" fill="#fff"/></svg>
<div class="r" style="left:1284.30px;top:177.60px;width:11.60px;height:11.60px;border:1.5px solid #777;border-radius:1.5px;background:#fff;"></div>
<div class="t" style="left:1299.00px;top:178.56px;font-size:11.5px;color:#333;font-weight:400;letter-spacing:-0.1px;">Tax Exempt</div>
<div class="r" style="left:1360.70px;top:181.50px;width:5.60px;height:5.60px;background:#e0e030;border-radius:50%;"></div>
<svg class="r" style="left:1369.20px;top:177.70px" width="11.2" height="11.2" viewBox="0 0 11.2 11.2"><circle cx="5.6" cy="5.6" r="5.6" fill="#111"/><path d="M3.45,4.29 C3.45,2.24 7.84,2.05 7.84,4.20 C7.84,5.51 5.60,5.69 5.60,7.09" fill="none" stroke="#fff" stroke-width="2.02" stroke-linecap="butt"/><rect x="4.54" y="7.95" width="2.13" height="1.90" fill="#fff"/></svg>
<div class="r" style="left:194.00px;top:220.00px;width:1298.60px;height:33.00px;background:#c26462;border-left:4px solid #8d3a3a;"></div>
<div class="t" style="left:774.30px;top:232.52px;font-size:11.2px;color:#fbeaea;font-weight:400;letter-spacing:0px;">795 Unassigned Contacts</div>
<svg class="r" style="left:905.20px;top:231.00px" width="11.6" height="11.6" viewBox="0 0 11.6 11.6"><circle cx="5.8" cy="5.8" r="5.8" fill="#fff"/><path d="M3.58,4.45 C3.58,2.32 8.12,2.13 8.12,4.35 C8.12,5.70 5.80,5.90 5.80,7.35" fill="none" stroke="#c26462" stroke-width="2.09" stroke-linecap="butt"/><rect x="4.70" y="8.24" width="2.20" height="1.97" fill="#c26462"/></svg>
<div class="r" style="left:194.50px;top:270.00px;width:1297.50px;height:527.00px;background:#fafafa;border:1px solid #dedede;"></div>
<div class="r" style="left:195.50px;top:297.00px;width:1295.50px;height:2.00px;background:#e2e2e2;"></div>
<svg class="r" style="left:202.00px;top:279.00px" width="11" height="10" viewBox="0 0 11 10"><rect x="0.5" y="0.5" width="10" height="9" fill="none" stroke="#333" stroke-width="1"/><rect x="0.5" y="0.5" width="10" height="2.2" fill="#333"/><path d="M0.5,5.5 L10.5,5.5 M3.8,2.5 L3.8,9.5 M7.2,2.5 L7.2,9.5" stroke="#333" stroke-width="1"/></svg>
<div class="t" style="left:220.00px;top:279.34px;font-size:12px;color:#333;font-weight:400;letter-spacing:-0.1px;">Browse or Search Contacts<span style="display:inline-block;position:relative;width:14.90px;height:0"><svg style="position:absolute;left:3.5px;top:-10.00px" width="11.4" height="11.4" viewBox="0 0 11.4 11.4"><circle cx="5.7" cy="5.7" r="5.7" fill="#111"/><path d="M3.52,4.37 C3.52,2.28 7.98,2.09 7.98,4.28 C7.98,5.61 5.70,5.79 5.70,7.22" fill="none" stroke="#fff" stroke-width="2.05" stroke-linecap="butt"/><rect x="4.62" y="8.09" width="2.17" height="1.94" fill="#fff"/></svg></span></div>
<div class="r" style="left:1437.00px;top:271.00px;width:1.00px;height:26.00px;background:#e6e6e6;"></div>
<div class="r" style="left:1466.20px;top:271.00px;width:1.00px;height:26.00px;background:#e6e6e6;"></div>
<div class="r" style="left:1444.30px;top:276.00px;width:16.20px;height:16.20px;background:#fff;border:1.5px solid #d0d0d0;"></div>
<svg class="r" style="left:1473.50px;top:278.50px" width="12" height="12" viewBox="0 0 12 12"><path d="M1,11 L11,1" stroke="#111" stroke-width="1.6"/><polygon points="11.5,0.5 11.5,5 7,0.5" fill="#111"/><polygon points="0.5,11.5 0.5,7 5,11.5" fill="#111"/></svg>
<div class="r" style="left:200.00px;top:303.70px;width:335.50px;height:26.60px;background:#fcf9e1;border:1px solid #ddd8b8;"></div>
<div class="t" style="left:211.30px;top:311.69px;font-size:10.4px;color:#a8a69a;font-weight:400;letter-spacing:0px;">Type To AutoSearch</div>
<div class="r" style="left:535.30px;top:303.70px;width:31.50px;height:26.60px;background:#6c9d6c;border:1px solid #5f8f5f;"></div>
<svg class="r" style="left:545.50px;top:311.00px" width="12" height="12" viewBox="0 0 12 12"><circle cx="5" cy="5" r="3.6" fill="none" stroke="#fff" stroke-width="2"/><line x1="7.6" y1="7.6" x2="11" y2="11" stroke="#fff" stroke-width="2.2"/></svg>
<div class="t" style="left:200.50px;top:334.30px;font-size:11.1px;color:#2f78ad;font-weight:400;letter-spacing:0px;">[Advanced Search]</div>
<div class="r" style="left:195.50px;top:359.20px;width:1295.50px;height:1.30px;background:#e0e0e0;"></div>
<div class="r" style="left:203.30px;top:365.00px;width:66.20px;height:24.80px;background:#fff;border:1px solid #d9d9d9;"></div>
<div class="t" style="left:215.50px;top:372.19px;font-size:11px;color:#444;font-weight:400;letter-spacing:0px;">10</div>
<svg class="r" style="left:256.50px;top:375.50px" width="8" height="4.8" viewBox="0 0 8 4.8"><polyline points="1,1 4.0,3.8 7,1" fill="none" stroke="#444" stroke-width="1.5"/></svg>
<div class="t" style="left:270.00px;top:374.97px;font-size:11.25px;color:#888;font-weight:400;letter-spacing:0px;">Showing 41 to 50 of 35,259 entries</div>
<div class="r" style="left:1179.30px;top:367.10px;width:303.30px;height:24.20px;background:#fff;border:1px solid #dddddd;"></div>
<div class="t" style="left:908.75px;width:600px;text-align:center;top:375.17px;font-size:9.6px;color:#3a70a0;font-weight:400;letter-spacing:0px;">Previous</div>
<div class="r" style="left:1237.70px;top:367.10px;width:1.00px;height:24.20px;background:#dddddd;"></div>
<div class="t" style="left:951.35px;width:600px;text-align:center;top:375.17px;font-size:9.6px;color:#3a70a0;font-weight:400;letter-spacing:0px;">1</div>
<div class="r" style="left:1264.00px;top:367.10px;width:1.00px;height:24.20px;background:#dddddd;"></div>
<div class="t" style="left:978.35px;width:600px;text-align:center;top:375.17px;font-size:9.6px;color:#b5b5b5;font-weight:400;letter-spacing:0px;">...</div>
<div class="r" style="left:1291.70px;top:367.10px;width:1.00px;height:24.20px;background:#dddddd;"></div>
<div class="t" style="left:1005.50px;width:600px;text-align:center;top:375.17px;font-size:9.6px;color:#3a70a0;font-weight:400;letter-spacing:0px;">4</div>
<div class="r" style="left:1318.30px;top:367.10px;width:1.00px;height:24.20px;background:#dddddd;"></div>
<div class="r" style="left:1318.80px;top:366.60px;width:26.40px;height:25.20px;background:#3d87c6;"></div>
<div class="t" style="left:1032.00px;width:600px;text-align:center;top:375.17px;font-size:9.6px;color:#fff;font-weight:400;letter-spacing:0px;">5</div>
<div class="r" style="left:1344.70px;top:367.10px;width:1.00px;height:24.20px;background:#dddddd;"></div>
<div class="t" style="left:1058.15px;width:600px;text-align:center;top:375.17px;font-size:9.6px;color:#3a70a0;font-weight:400;letter-spacing:0px;">6</div>
<div class="r" style="left:1370.60px;top:367.10px;width:1.00px;height:24.20px;background:#dddddd;"></div>
<div class="t" style="left:1085.30px;width:600px;text-align:center;top:375.17px;font-size:9.6px;color:#b5b5b5;font-weight:400;letter-spacing:0px;">...</div>
<div class="r" style="left:1399.00px;top:367.10px;width:1.00px;height:24.20px;background:#dddddd;"></div>
<div class="t" style="left:1120.60px;width:600px;text-align:center;top:375.17px;font-size:9.6px;color:#3a70a0;font-weight:400;letter-spacing:0px;">3526</div>
<div class="r" style="left:1441.20px;top:367.10px;width:1.00px;height:24.20px;background:#dddddd;"></div>
<div class="t" style="left:1162.15px;width:600px;text-align:center;top:375.17px;font-size:9.6px;color:#3a70a0;font-weight:400;letter-spacing:0px;">Next</div>
<div class="r" style="left:195.50px;top:403.60px;width:1295.50px;height:28.10px;background:#f3f3f3;"></div>
<div class="r" style="left:267.00px;top:403.60px;width:55.70px;height:28.10px;background:#e9e9e9;"></div>
<div class="r" style="left:195.50px;top:431.70px;width:1295.50px;height:28.90px;background:#f6f6f6;"></div>
<div class="r" style="left:195.50px;top:460.60px;width:1295.50px;height:35.70px;background:#ffffff;"></div>
<div class="r" style="left:195.50px;top:496.30px;width:1295.50px;height:35.00px;background:#f6f6f6;"></div>
<div class="r" style="left:195.50px;top:531.30px;width:1295.50px;height:36.00px;background:#ffffff;"></div>
<div class="r" style="left:195.50px;top:567.30px;width:1295.50px;height:28.30px;background:#f6f6f6;"></div>
<div class="r" style="left:195.50px;top:595.60px;width:1295.50px;height:27.40px;background:#ffffff;"></div>
<div class="r" style="left:195.50px;top:623.00px;width:1295.50px;height:35.40px;background:#f6f6f6;"></div>
<div class="r" style="left:195.50px;top:658.40px;width:1295.50px;height:35.20px;background:#ffffff;"></div>
<div class="r" style="left:195.50px;top:693.60px;width:1295.50px;height:36.70px;background:#f6f6f6;"></div>
<div class="r" style="left:195.50px;top:730.30px;width:1295.50px;height:26.70px;background:#ffffff;"></div>
<div class="r" style="left:195.50px;top:430.70px;width:1295.50px;height:2.00px;background:#dddddd;"></div>
<div class="r" style="left:195.50px;top:460.10px;width:1295.50px;height:1.00px;background:#e3e3e3;"></div>
<div class="r" style="left:195.50px;top:495.80px;width:1295.50px;height:1.00px;background:#e3e3e3;"></div>
<div class="r" style="left:195.50px;top:530.80px;width:1295.50px;height:1.00px;background:#e3e3e3;"></div>
<div class="r" style="left:195.50px;top:566.80px;width:1295.50px;height:1.00px;background:#e3e3e3;"></div>
<div class="r" style="left:195.50px;top:595.10px;width:1295.50px;height:1.00px;background:#e3e3e3;"></div>
<div class="r" style="left:195.50px;top:622.50px;width:1295.50px;height:1.00px;background:#e3e3e3;"></div>
<div class="r" style="left:195.50px;top:657.90px;width:1295.50px;height:1.00px;background:#e3e3e3;"></div>
<div class="r" style="left:195.50px;top:693.10px;width:1295.50px;height:1.00px;background:#e3e3e3;"></div>
<div class="r" style="left:195.50px;top:729.80px;width:1295.50px;height:1.00px;background:#e3e3e3;"></div>
<div class="r" style="left:195.50px;top:756.50px;width:1295.50px;height:1.50px;background:#dcdcdc;"></div>
<div class="r" style="left:237.50px;top:403.60px;width:1.00px;height:353.40px;background:#e3e3e3;"></div>
<div class="r" style="left:266.50px;top:403.60px;width:1.00px;height:353.40px;background:#e3e3e3;"></div>
<div class="r" style="left:322.20px;top:403.60px;width:1.00px;height:353.40px;background:#e3e3e3;"></div>
<div class="r" style="left:514.90px;top:403.60px;width:1.00px;height:353.40px;background:#e3e3e3;"></div>
<div class="r" style="left:711.00px;top:403.60px;width:1.00px;height:353.40px;background:#e3e3e3;"></div>
<div class="r" style="left:793.80px;top:403.60px;width:1.00px;height:353.40px;background:#e3e3e3;"></div>
<div class="r" style="left:891.30px;top:403.60px;width:1.00px;height:353.40px;background:#e3e3e3;"></div>
<div class="r" style="left:994.00px;top:403.60px;width:1.00px;height:353.40px;background:#e3e3e3;"></div>
<div class="r" style="left:1049.70px;top:403.60px;width:1.00px;height:353.40px;background:#e3e3e3;"></div>
<div class="r" style="left:1074.80px;top:403.60px;width:1.00px;height:353.40px;background:#e3e3e3;"></div>
<div class="r" style="left:1158.90px;top:403.60px;width:1.00px;height:353.40px;background:#e3e3e3;"></div>
<div class="r" style="left:1219.80px;top:403.60px;width:1.00px;height:353.40px;background:#e3e3e3;"></div>
<div class="r" style="left:1275.10px;top:403.60px;width:1.00px;height:353.40px;background:#e3e3e3;"></div>
<div class="r" style="left:1337.20px;top:403.60px;width:1.00px;height:353.40px;background:#e3e3e3;"></div>
<div class="r" style="left:1426.90px;top:403.60px;width:1.00px;height:353.40px;background:#e3e3e3;"></div>
<div class="t" style="left:210.90px;top:412.52px;font-size:10.6px;color:#2f78ad;font-weight:700;letter-spacing:0px;">All</div>
<div class="t" style="left:275.70px;top:412.36px;font-size:10.8px;color:#333;font-weight:700;letter-spacing:0px;">ID</div>
<svg class="r" style="left:309.50px;top:415.30px" width="8" height="4.5" viewBox="0 0 8 4.5"><polygon points="0,0 8,0 4.0,4.0" fill="#333"/></svg>
<div class="t" style="left:330.60px;top:412.36px;font-size:10.8px;color:#333;font-weight:700;letter-spacing:0px;">Name</div>
<svg class="r" style="left:504.00px;top:410.50px" width="7" height="14" viewBox="0 0 7 14"><polyline points="0.8,5.5 3.5,1.2 6.2,5.5" fill="none" stroke="#d0d0d0" stroke-width="1.1"/><polyline points="0.8,8.5 3.5,12.8 6.2,8.5" fill="none" stroke="#d0d0d0" stroke-width="1.1"/></svg>
<div class="t" style="left:524.00px;top:412.36px;font-size:10.8px;color:#333;font-weight:700;letter-spacing:0px;">Email</div>
<svg class="r" style="left:699.50px;top:410.50px" width="7" height="14" viewBox="0 0 7 14"><polyline points="0.8,5.5 3.5,1.2 6.2,5.5" fill="none" stroke="#d0d0d0" stroke-width="1.1"/><polyline points="0.8,8.5 3.5,12.8 6.2,8.5" fill="none" stroke="#d0d0d0" stroke-width="1.1"/></svg>
<div class="t" style="left:720.20px;top:412.44px;font-size:10.7px;color:#333;font-weight:700;letter-spacing:-0.05px;">Verification</div>
<svg class="r" style="left:782.00px;top:410.50px" width="7" height="14" viewBox="0 0 7 14"><polyline points="0.8,5.5 3.5,1.2 6.2,5.5" fill="none" stroke="#d0d0d0" stroke-width="1.1"/><polyline points="0.8,8.5 3.5,12.8 6.2,8.5" fill="none" stroke="#d0d0d0" stroke-width="1.1"/></svg>
<div class="t" style="left:820.00px;top:412.69px;font-size:10.4px;color:#333;font-weight:700;letter-spacing:0px;">Orders</div>
<svg class="r" style="left:856.70px;top:412.80px" width="9.6" height="9.6" viewBox="0 0 9.6 9.6"><circle cx="4.8" cy="4.8" r="4.8" fill="#111"/><path d="M2.96,3.68 C2.96,1.92 6.72,1.76 6.72,3.60 C6.72,4.72 4.80,4.88 4.80,6.08" fill="none" stroke="#fff" stroke-width="1.73" stroke-linecap="butt"/><rect x="3.89" y="6.82" width="1.82" height="1.63" fill="#fff"/></svg>
<div class="t" style="left:918.60px;top:413.03px;font-size:10px;color:#333;font-weight:700;letter-spacing:0px;">Actions</div>
<svg class="r" style="left:958.00px;top:412.80px" width="9.6" height="9.6" viewBox="0 0 9.6 9.6"><circle cx="4.8" cy="4.8" r="4.8" fill="#111"/><path d="M2.96,3.68 C2.96,1.92 6.72,1.76 6.72,3.60 C6.72,4.72 4.80,4.88 4.80,6.08" fill="none" stroke="#fff" stroke-width="1.73" stroke-linecap="butt"/><rect x="3.89" y="6.82" width="1.82" height="1.63" fill="#fff"/></svg>
<div class="t" style="left:1084.00px;top:412.61px;font-size:10.5px;color:#333;font-weight:700;letter-spacing:0px;">Credit</div>
<svg class="r" style="left:1148.50px;top:410.50px" width="7" height="14" viewBox="0 0 7 14"><polyline points="0.8,5.5 3.5,1.2 6.2,5.5" fill="none" stroke="#d0d0d0" stroke-width="1.1"/><polyline points="0.8,8.5 3.5,12.8 6.2,8.5" fill="none" stroke="#d0d0d0" stroke-width="1.1"/></svg>
<div class="t" style="left:1167.70px;top:412.61px;font-size:10.5px;color:#333;font-weight:700;letter-spacing:0px;">Rep</div>
<div class="t" style="left:1229.00px;top:412.61px;font-size:10.5px;color:#333;font-weight:700;letter-spacing:0px;">Tier</div>
<div class="t" style="left:1284.00px;top:412.61px;font-size:10.5px;color:#333;font-weight:700;letter-spacing:0px;">Type</div>
<div class="r" style="left:211.00px;top:441.20px;width:11.50px;height:11.50px;border:1.6px solid #777;border-radius:1.5px;background:#fff;"></div>
<svg class="r" style="left:249.50px;top:441.70px" width="8" height="8" viewBox="0 0 8 8"><circle cx="3" cy="3" r="2.1" fill="none" stroke="#6aa38a" stroke-width="1.3"/><line x1="4.5" y1="4.5" x2="7.5" y2="7.5" stroke="#6aa38a" stroke-width="1.6"/></svg>
<div class="t" style="left:272.30px;top:440.06px;font-size:9.5px;color:#333;font-weight:400;letter-spacing:0px;">44700</div>
<div class="t" style="left:327.20px;top:440.06px;font-size:9.5px;color:#2f78ad;font-weight:400;letter-spacing:0px;">Travis Waldron</div>
<div class="t" style="left:520.40px;top:439.97px;font-size:9.6px;color:#2f78ad;font-weight:400;letter-spacing:0px;">Travis@Waldron.com<span style="display:inline-block;position:relative;width:13px;height:0"><svg style="position:absolute;left:2px;top:-8.5px" width="11" height="10" viewBox="0 0 11 10"><rect x="3.5" y="0.6" width="6.9" height="5.9" fill="none" stroke="#777" stroke-width="1.1"/><path d="M3.5,3.3 L0.6,3.3 L0.6,9.4 L7.3,9.4 L7.3,6.5" fill="none" stroke="#777" stroke-width="1.1"/></svg></span></div>
<div class="t" style="left:716.80px;top:440.06px;font-size:9.5px;color:#333;font-weight:400;letter-spacing:0px;">0/0</div>
<div class="t" style="left:837.00px;top:440.06px;font-size:9.5px;color:#2f78ad;font-weight:400;letter-spacing:0px;">0/0</div>
<div class="r" style="left:915.60px;top:437.40px;width:56.00px;height:18.40px;background:#fff;border:1px solid #cfcfcf;border-radius:2px;"></div>
<div class="r" style="left:949.80px;top:437.40px;width:1.00px;height:18.40px;background:#cfcfcf;"></div>
<div class="t" style="left:920.60px;top:442.66px;font-size:10.2px;color:#333;font-weight:400;letter-spacing:0px;">Login</div>
<svg class="r" style="left:956.50px;top:446.00px" width="7" height="4.0" viewBox="0 0 7 4.0"><polygon points="0,0 7,0 3.5,3.5" fill="#222"/></svg>
<svg class="r" style="left:1008.50px;top:439.50px" width="8" height="8" viewBox="0 0 8 8"><path d="M7.90,3.13 L7.90,4.87 L6.77,4.86 L6.57,5.35 L7.38,6.14 L6.14,7.38 L5.35,6.57 L4.86,6.77 L4.87,7.90 L3.13,7.90 L3.14,6.77 L2.65,6.57 L1.86,7.38 L0.62,6.14 L1.43,5.35 L1.23,4.86 L0.10,4.87 L0.10,3.13 L1.23,3.14 L1.43,2.65 L0.62,1.86 L1.86,0.62 L2.65,1.43 L3.14,1.23 L3.13,0.10 L4.87,0.10 L4.86,1.23 L5.35,1.43 L6.14,0.62 L7.38,1.86 L6.57,2.65 L6.77,3.14 Z" fill="#2f78ad"/><circle cx="4" cy="4" r="1.3" fill="#fff"/></svg>
<div class="t" style="left:1019.30px;top:440.06px;font-size:9.5px;color:#2f78ad;font-weight:400;letter-spacing:0px;">edit</div>
<svg class="r" style="left:1059.50px;top:440.50px" width="7" height="7" viewBox="0 0 7 7"><path d="M1,1 L6,6 M6,1 L1,6" stroke="#d42a2a" stroke-width="2"/></svg>
<div class="t" style="left:1080.50px;top:440.06px;font-size:9.5px;color:#333;font-weight:400;letter-spacing:0px;">$0.00</div>
<div class="t" style="left:1164.60px;top:440.06px;font-size:9.5px;color:#2f78ad;font-weight:400;letter-spacing:0px;">Mary.A</div>
<div class="t" style="left:1225.70px;top:440.06px;font-size:9.5px;color:#2f78ad;font-weight:400;letter-spacing:0px;">retail</div>
<div class="t" style="left:1280.30px;top:440.06px;font-size:9.5px;color:#333;font-weight:400;letter-spacing:0px;">Lead</div>
<div class="t" style="left:1342.50px;top:440.14px;font-size:9.4px;color:#2f78ad;font-weight:400;letter-spacing:0px;">Set Inactive</div>
<div class="t" style="left:1432.40px;top:440.06px;font-size:9.5px;color:#b83232;font-weight:400;letter-spacing:-0.25px;">M3GRD</div>
<div class="r" style="left:211.00px;top:470.10px;width:11.50px;height:11.50px;border:1.6px solid #777;border-radius:1.5px;background:#fff;"></div>
<svg class="r" style="left:249.50px;top:470.60px" width="8" height="8" viewBox="0 0 8 8"><circle cx="3" cy="3" r="2.1" fill="none" stroke="#6aa38a" stroke-width="1.3"/><line x1="4.5" y1="4.5" x2="7.5" y2="7.5" stroke="#6aa38a" stroke-width="1.6"/></svg>
<div class="t" style="left:272.30px;top:468.16px;font-size:9.5px;color:#333;font-weight:400;letter-spacing:0px;">44699</div>
<div class="t" style="left:327.20px;top:468.16px;font-size:9.5px;color:#2f78ad;font-weight:400;letter-spacing:0px;">Katsuyuki Yanagawa</div>
<div class="t" style="left:327.20px;top:480.86px;font-size:9.5px;color:#666;font-weight:400;letter-spacing:0px;">Sushi By Katsuyuki</div>
<div class="t" style="left:520.40px;top:468.07px;font-size:9.6px;color:#2f78ad;font-weight:400;letter-spacing:0px;">Sushi@intuit.com<span style="display:inline-block;position:relative;width:13px;height:0"><svg style="position:absolute;left:2px;top:-8.5px" width="11" height="10" viewBox="0 0 11 10"><rect x="3.5" y="0.6" width="6.9" height="5.9" fill="none" stroke="#777" stroke-width="1.1"/><path d="M3.5,3.3 L0.6,3.3 L0.6,9.4 L7.3,9.4 L7.3,6.5" fill="none" stroke="#777" stroke-width="1.1"/></svg></span></div>
<div class="t" style="left:716.80px;top:468.16px;font-size:9.5px;color:#333;font-weight:400;letter-spacing:0px;">0/0</div>
<div class="t" style="left:837.00px;top:468.16px;font-size:9.5px;color:#2f78ad;font-weight:400;letter-spacing:0px;">0/0</div>
<div class="r" style="left:915.60px;top:466.30px;width:56.00px;height:18.40px;background:#fff;border:1px solid #cfcfcf;border-radius:2px;"></div>
<div class="r" style="left:949.80px;top:466.30px;width:1.00px;height:18.40px;background:#cfcfcf;"></div>
<div class="t" style="left:920.60px;top:471.56px;font-size:10.2px;color:#333;font-weight:400;letter-spacing:0px;">Login</div>
<svg class="r" style="left:956.50px;top:474.90px" width="7" height="4.0" viewBox="0 0 7 4.0"><polygon points="0,0 7,0 3.5,3.5" fill="#222"/></svg>
<svg class="r" style="left:1008.50px;top:468.40px" width="8" height="8" viewBox="0 0 8 8"><path d="M7.90,3.13 L7.90,4.87 L6.77,4.86 L6.57,5.35 L7.38,6.14 L6.14,7.38 L5.35,6.57 L4.86,6.77 L4.87,7.90 L3.13,7.90 L3.14,6.77 L2.65,6.57 L1.86,7.38 L0.62,6.14 L1.43,5.35 L1.23,4.86 L0.10,4.87 L0.10,3.13 L1.23,3.14 L1.43,2.65 L0.62,1.86 L1.86,0.62 L2.65,1.43 L3.14,1.23 L3.13,0.10 L4.87,0.10 L4.86,1.23 L5.35,1.43 L6.14,0.62 L7.38,1.86 L6.57,2.65 L6.77,3.14 Z" fill="#2f78ad"/><circle cx="4" cy="4" r="1.3" fill="#fff"/></svg>
<div class="t" style="left:1019.30px;top:468.16px;font-size:9.5px;color:#2f78ad;font-weight:400;letter-spacing:0px;">edit</div>
<svg class="r" style="left:1059.50px;top:469.40px" width="7" height="7" viewBox="0 0 7 7"><path d="M1,1 L6,6 M6,1 L1,6" stroke="#d42a2a" stroke-width="2"/></svg>
<div class="t" style="left:1080.50px;top:468.16px;font-size:9.5px;color:#333;font-weight:400;letter-spacing:0px;">$0.00</div>
<div class="t" style="left:1164.60px;top:468.16px;font-size:9.5px;color:#2f78ad;font-weight:400;letter-spacing:0px;">Mary.A</div>
<div class="t" style="left:1225.70px;top:468.16px;font-size:9.5px;color:#2f78ad;font-weight:400;letter-spacing:0px;">retail</div>
<div class="t" style="left:1280.30px;top:468.16px;font-size:9.5px;color:#333;font-weight:400;letter-spacing:0px;">Lead</div>
<div class="t" style="left:1342.50px;top:468.24px;font-size:9.4px;color:#2f78ad;font-weight:400;letter-spacing:0px;">Set Inactive</div>
<div class="t" style="left:1432.40px;top:468.16px;font-size:9.5px;color:#b83232;font-weight:400;letter-spacing:-0.25px;">M3GRD</div>
<div class="r" style="left:211.00px;top:505.80px;width:11.50px;height:11.50px;border:1.6px solid #777;border-radius:1.5px;background:#fff;"></div>
<svg class="r" style="left:249.50px;top:506.30px" width="8" height="8" viewBox="0 0 8 8"><circle cx="3" cy="3" r="2.1" fill="none" stroke="#6aa38a" stroke-width="1.3"/><line x1="4.5" y1="4.5" x2="7.5" y2="7.5" stroke="#6aa38a" stroke-width="1.6"/></svg>
<div class="t" style="left:272.30px;top:503.86px;font-size:9.5px;color:#333;font-weight:400;letter-spacing:0px;">44698</div>
<div class="t" style="left:327.20px;top:503.86px;font-size:9.5px;color:#2f78ad;font-weight:400;letter-spacing:0px;">Russ Sonnenschein</div>
<div class="t" style="left:327.20px;top:516.56px;font-size:9.5px;color:#666;font-weight:400;letter-spacing:0px;">Sonnenschein Family Store</div>
<div class="t" style="left:520.40px;top:503.77px;font-size:9.6px;color:#2f78ad;font-weight:400;letter-spacing:0px;">Familiystore@intuit.com<span style="display:inline-block;position:relative;width:13px;height:0"><svg style="position:absolute;left:2px;top:-8.5px" width="11" height="10" viewBox="0 0 11 10"><rect x="3.5" y="0.6" width="6.9" height="5.9" fill="none" stroke="#777" stroke-width="1.1"/><path d="M3.5,3.3 L0.6,3.3 L0.6,9.4 L7.3,9.4 L7.3,6.5" fill="none" stroke="#777" stroke-width="1.1"/></svg></span></div>
<div class="t" style="left:716.80px;top:503.86px;font-size:9.5px;color:#333;font-weight:400;letter-spacing:0px;">0/0</div>
<div class="t" style="left:837.00px;top:503.86px;font-size:9.5px;color:#2f78ad;font-weight:400;letter-spacing:0px;">0/0</div>
<div class="r" style="left:915.60px;top:502.00px;width:56.00px;height:18.40px;background:#fff;border:1px solid #cfcfcf;border-radius:2px;"></div>
<div class="r" style="left:949.80px;top:502.00px;width:1.00px;height:18.40px;background:#cfcfcf;"></div>
<div class="t" style="left:920.60px;top:507.26px;font-size:10.2px;color:#333;font-weight:400;letter-spacing:0px;">Login</div>
<svg class="r" style="left:956.50px;top:510.60px" width="7" height="4.0" viewBox="0 0 7 4.0"><polygon points="0,0 7,0 3.5,3.5" fill="#222"/></svg>
<svg class="r" style="left:1008.50px;top:504.10px" width="8" height="8" viewBox="0 0 8 8"><path d="M7.90,3.13 L7.90,4.87 L6.77,4.86 L6.57,5.35 L7.38,6.14 L6.14,7.38 L5.35,6.57 L4.86,6.77 L4.87,7.90 L3.13,7.90 L3.14,6.77 L2.65,6.57 L1.86,7.38 L0.62,6.14 L1.43,5.35 L1.23,4.86 L0.10,4.87 L0.10,3.13 L1.23,3.14 L1.43,2.65 L0.62,1.86 L1.86,0.62 L2.65,1.43 L3.14,1.23 L3.13,0.10 L4.87,0.10 L4.86,1.23 L5.35,1.43 L6.14,0.62 L7.38,1.86 L6.57,2.65 L6.77,3.14 Z" fill="#2f78ad"/><circle cx="4" cy="4" r="1.3" fill="#fff"/></svg>
<div class="t" style="left:1019.30px;top:503.86px;font-size:9.5px;color:#2f78ad;font-weight:400;letter-spacing:0px;">edit</div>
<svg class="r" style="left:1059.50px;top:505.10px" width="7" height="7" viewBox="0 0 7 7"><path d="M1,1 L6,6 M6,1 L1,6" stroke="#d42a2a" stroke-width="2"/></svg>
<div class="t" style="left:1080.50px;top:503.86px;font-size:9.5px;color:#333;font-weight:400;letter-spacing:0px;">$0.00</div>
<div class="t" style="left:1164.60px;top:503.86px;font-size:9.5px;color:#2f78ad;font-weight:400;letter-spacing:0px;">Mary.A</div>
<div class="t" style="left:1225.70px;top:503.86px;font-size:9.5px;color:#2f78ad;font-weight:400;letter-spacing:0px;">retail</div>
<div class="t" style="left:1280.30px;top:503.86px;font-size:9.5px;color:#333;font-weight:400;letter-spacing:0px;">Lead</div>
<div class="t" style="left:1342.50px;top:503.94px;font-size:9.4px;color:#2f78ad;font-weight:400;letter-spacing:0px;">Set Inactive</div>
<div class="t" style="left:1432.40px;top:503.86px;font-size:9.5px;color:#b83232;font-weight:400;letter-spacing:-0.25px;">M3GRD</div>
<div class="r" style="left:211.00px;top:540.80px;width:11.50px;height:11.50px;border:1.6px solid #777;border-radius:1.5px;background:#fff;"></div>
<svg class="r" style="left:249.50px;top:541.30px" width="8" height="8" viewBox="0 0 8 8"><circle cx="3" cy="3" r="2.1" fill="none" stroke="#6aa38a" stroke-width="1.3"/><line x1="4.5" y1="4.5" x2="7.5" y2="7.5" stroke="#6aa38a" stroke-width="1.6"/></svg>
<div class="t" style="left:272.30px;top:538.86px;font-size:9.5px;color:#333;font-weight:400;letter-spacing:0px;">44697</div>
<div class="t" style="left:327.20px;top:538.86px;font-size:9.5px;color:#2f78ad;font-weight:400;letter-spacing:0px;">Shara Barnett</div>
<div class="t" style="left:327.20px;top:551.56px;font-size:9.5px;color:#666;font-weight:400;letter-spacing:0px;">Barnett Design</div>
<div class="t" style="left:520.40px;top:538.77px;font-size:9.6px;color:#2f78ad;font-weight:400;letter-spacing:0px;">Design@intuit.com<span style="display:inline-block;position:relative;width:13px;height:0"><svg style="position:absolute;left:2px;top:-8.5px" width="11" height="10" viewBox="0 0 11 10"><rect x="3.5" y="0.6" width="6.9" height="5.9" fill="none" stroke="#777" stroke-width="1.1"/><path d="M3.5,3.3 L0.6,3.3 L0.6,9.4 L7.3,9.4 L7.3,6.5" fill="none" stroke="#777" stroke-width="1.1"/></svg></span></div>
<div class="t" style="left:716.80px;top:538.86px;font-size:9.5px;color:#333;font-weight:400;letter-spacing:0px;">0/0</div>
<div class="t" style="left:837.00px;top:538.86px;font-size:9.5px;color:#2f78ad;font-weight:400;letter-spacing:0px;">0/0</div>
<div class="r" style="left:915.60px;top:537.00px;width:56.00px;height:18.40px;background:#fff;border:1px solid #cfcfcf;border-radius:2px;"></div>
<div class="r" style="left:949.80px;top:537.00px;width:1.00px;height:18.40px;background:#cfcfcf;"></div>
<div class="t" style="left:920.60px;top:542.26px;font-size:10.2px;color:#333;font-weight:400;letter-spacing:0px;">Login</div>
<svg class="r" style="left:956.50px;top:545.60px" width="7" height="4.0" viewBox="0 0 7 4.0"><polygon points="0,0 7,0 3.5,3.5" fill="#222"/></svg>
<svg class="r" style="left:1008.50px;top:539.10px" width="8" height="8" viewBox="0 0 8 8"><path d="M7.90,3.13 L7.90,4.87 L6.77,4.86 L6.57,5.35 L7.38,6.14 L6.14,7.38 L5.35,6.57 L4.86,6.77 L4.87,7.90 L3.13,7.90 L3.14,6.77 L2.65,6.57 L1.86,7.38 L0.62,6.14 L1.43,5.35 L1.23,4.86 L0.10,4.87 L0.10,3.13 L1.23,3.14 L1.43,2.65 L0.62,1.86 L1.86,0.62 L2.65,1.43 L3.14,1.23 L3.13,0.10 L4.87,0.10 L4.86,1.23 L5.35,1.43 L6.14,0.62 L7.38,1.86 L6.57,2.65 L6.77,3.14 Z" fill="#2f78ad"/><circle cx="4" cy="4" r="1.3" fill="#fff"/></svg>
<div class="t" style="left:1019.30px;top:538.86px;font-size:9.5px;color:#2f78ad;font-weight:400;letter-spacing:0px;">edit</div>
<svg class="r" style="left:1059.50px;top:540.10px" width="7" height="7" viewBox="0 0 7 7"><path d="M1,1 L6,6 M6,1 L1,6" stroke="#d42a2a" stroke-width="2"/></svg>
<div class="t" style="left:1080.50px;top:538.86px;font-size:9.5px;color:#333;font-weight:400;letter-spacing:0px;">$0.00</div>
<div class="t" style="left:1164.60px;top:538.86px;font-size:9.5px;color:#2f78ad;font-weight:400;letter-spacing:0px;">Mary.A</div>
<div class="t" style="left:1225.70px;top:538.86px;font-size:9.5px;color:#2f78ad;font-weight:400;letter-spacing:0px;">retail</div>
<div class="t" style="left:1280.30px;top:538.86px;font-size:9.5px;color:#333;font-weight:400;letter-spacing:0px;">Lead</div>
<div class="t" style="left:1342.50px;top:538.94px;font-size:9.4px;color:#2f78ad;font-weight:400;letter-spacing:0px;">Set Inactive</div>
<div class="t" style="left:1432.40px;top:538.86px;font-size:9.5px;color:#b83232;font-weight:400;letter-spacing:-0.25px;">M3GRD</div>
<div class="r" style="left:211.00px;top:576.80px;width:11.50px;height:11.50px;border:1.6px solid #777;border-radius:1.5px;background:#fff;"></div>
<svg class="r" style="left:249.50px;top:577.30px" width="8" height="8" viewBox="0 0 8 8"><circle cx="3" cy="3" r="2.1" fill="none" stroke="#6aa38a" stroke-width="1.3"/><line x1="4.5" y1="4.5" x2="7.5" y2="7.5" stroke="#6aa38a" stroke-width="1.6"/></svg>
<div class="t" style="left:272.30px;top:574.86px;font-size:9.5px;color:#333;font-weight:400;letter-spacing:0px;">44696</div>
<div class="t" style="left:327.20px;top:574.86px;font-size:9.5px;color:#2f78ad;font-weight:400;letter-spacing:0px;">Shara Barnett</div>
<div class="t" style="left:520.40px;top:574.77px;font-size:9.6px;color:#2f78ad;font-weight:400;letter-spacing:0px;">Shara@Barnett.com<span style="display:inline-block;position:relative;width:13px;height:0"><svg style="position:absolute;left:2px;top:-8.5px" width="11" height="10" viewBox="0 0 11 10"><rect x="3.5" y="0.6" width="6.9" height="5.9" fill="none" stroke="#777" stroke-width="1.1"/><path d="M3.5,3.3 L0.6,3.3 L0.6,9.4 L7.3,9.4 L7.3,6.5" fill="none" stroke="#777" stroke-width="1.1"/></svg></span></div>
<div class="t" style="left:716.80px;top:574.86px;font-size:9.5px;color:#333;font-weight:400;letter-spacing:0px;">0/0</div>
<div class="t" style="left:837.00px;top:574.86px;font-size:9.5px;color:#2f78ad;font-weight:400;letter-spacing:0px;">0/0</div>
<div class="r" style="left:915.60px;top:573.00px;width:56.00px;height:18.40px;background:#fff;border:1px solid #cfcfcf;border-radius:2px;"></div>
<div class="r" style="left:949.80px;top:573.00px;width:1.00px;height:18.40px;background:#cfcfcf;"></div>
<div class="t" style="left:920.60px;top:578.26px;font-size:10.2px;color:#333;font-weight:400;letter-spacing:0px;">Login</div>
<svg class="r" style="left:956.50px;top:581.60px" width="7" height="4.0" viewBox="0 0 7 4.0"><polygon points="0,0 7,0 3.5,3.5" fill="#222"/></svg>
<svg class="r" style="left:1008.50px;top:575.10px" width="8" height="8" viewBox="0 0 8 8"><path d="M7.90,3.13 L7.90,4.87 L6.77,4.86 L6.57,5.35 L7.38,6.14 L6.14,7.38 L5.35,6.57 L4.86,6.77 L4.87,7.90 L3.13,7.90 L3.14,6.77 L2.65,6.57 L1.86,7.38 L0.62,6.14 L1.43,5.35 L1.23,4.86 L0.10,4.87 L0.10,3.13 L1.23,3.14 L1.43,2.65 L0.62,1.86 L1.86,0.62 L2.65,1.43 L3.14,1.23 L3.13,0.10 L4.87,0.10 L4.86,1.23 L5.35,1.43 L6.14,0.62 L7.38,1.86 L6.57,2.65 L6.77,3.14 Z" fill="#2f78ad"/><circle cx="4" cy="4" r="1.3" fill="#fff"/></svg>
<div class="t" style="left:1019.30px;top:574.86px;font-size:9.5px;color:#2f78ad;font-weight:400;letter-spacing:0px;">edit</div>
<svg class="r" style="left:1059.50px;top:576.10px" width="7" height="7" viewBox="0 0 7 7"><path d="M1,1 L6,6 M6,1 L1,6" stroke="#d42a2a" stroke-width="2"/></svg>
<div class="t" style="left:1080.50px;top:574.86px;font-size:9.5px;color:#333;font-weight:400;letter-spacing:0px;">$0.00</div>
<div class="t" style="left:1164.60px;top:574.86px;font-size:9.5px;color:#2f78ad;font-weight:400;letter-spacing:0px;">Mary.A</div>
<div class="t" style="left:1225.70px;top:574.86px;font-size:9.5px;color:#2f78ad;font-weight:400;letter-spacing:0px;">retail</div>
<div class="t" style="left:1280.30px;top:574.86px;font-size:9.5px;color:#333;font-weight:400;letter-spacing:0px;">Lead</div>
<div class="t" style="left:1342.50px;top:574.94px;font-size:9.4px;color:#2f78ad;font-weight:400;letter-spacing:0px;">Set Inactive</div>
<div class="t" style="left:1432.40px;top:574.86px;font-size:9.5px;color:#b83232;font-weight:400;letter-spacing:-0.25px;">M3GRD</div>
<div class="r" style="left:211.00px;top:605.10px;width:11.50px;height:11.50px;border:1.6px solid #777;border-radius:1.5px;background:#fff;"></div>
<svg class="r" style="left:249.50px;top:605.60px" width="8" height="8" viewBox="0 0 8 8"><circle cx="3" cy="3" r="2.1" fill="none" stroke="#6aa38a" stroke-width="1.3"/><line x1="4.5" y1="4.5" x2="7.5" y2="7.5" stroke="#6aa38a" stroke-width="1.6"/></svg>
<div class="t" style="left:272.30px;top:603.16px;font-size:9.5px;color:#333;font-weight:400;letter-spacing:0px;">44695</div>
<div class="t" style="left:327.20px;top:603.16px;font-size:9.5px;color:#2f78ad;font-weight:400;letter-spacing:0px;">Rondonuwu And Vegi</div>
<div class="t" style="left:520.40px;top:603.07px;font-size:9.6px;color:#2f78ad;font-weight:400;letter-spacing:0px;">Tony@Rondonuwu.com<span style="display:inline-block;position:relative;width:13px;height:0"><svg style="position:absolute;left:2px;top:-8.5px" width="11" height="10" viewBox="0 0 11 10"><rect x="3.5" y="0.6" width="6.9" height="5.9" fill="none" stroke="#777" stroke-width="1.1"/><path d="M3.5,3.3 L0.6,3.3 L0.6,9.4 L7.3,9.4 L7.3,6.5" fill="none" stroke="#777" stroke-width="1.1"/></svg></span></div>
<div class="t" style="left:716.80px;top:603.16px;font-size:9.5px;color:#333;font-weight:400;letter-spacing:0px;">0/0</div>
<div class="t" style="left:837.00px;top:603.16px;font-size:9.5px;color:#2f78ad;font-weight:400;letter-spacing:0px;">0/0</div>
<div class="r" style="left:915.60px;top:601.30px;width:56.00px;height:18.40px;background:#fff;border:1px solid #cfcfcf;border-radius:2px;"></div>
<div class="r" style="left:949.80px;top:601.30px;width:1.00px;height:18.40px;background:#cfcfcf;"></div>
<div class="t" style="left:920.60px;top:606.56px;font-size:10.2px;color:#333;font-weight:400;letter-spacing:0px;">Login</div>
<svg class="r" style="left:956.50px;top:609.90px" width="7" height="4.0" viewBox="0 0 7 4.0"><polygon points="0,0 7,0 3.5,3.5" fill="#222"/></svg>
<svg class="r" style="left:1008.50px;top:603.40px" width="8" height="8" viewBox="0 0 8 8"><path d="M7.90,3.13 L7.90,4.87 L6.77,4.86 L6.57,5.35 L7.38,6.14 L6.14,7.38 L5.35,6.57 L4.86,6.77 L4.87,7.90 L3.13,7.90 L3.14,6.77 L2.65,6.57 L1.86,7.38 L0.62,6.14 L1.43,5.35 L1.23,4.86 L0.10,4.87 L0.10,3.13 L1.23,3.14 L1.43,2.65 L0.62,1.86 L1.86,0.62 L2.65,1.43 L3.14,1.23 L3.13,0.10 L4.87,0.10 L4.86,1.23 L5.35,1.43 L6.14,0.62 L7.38,1.86 L6.57,2.65 L6.77,3.14 Z" fill="#2f78ad"/><circle cx="4" cy="4" r="1.3" fill="#fff"/></svg>
<div class="t" style="left:1019.30px;top:603.16px;font-size:9.5px;color:#2f78ad;font-weight:400;letter-spacing:0px;">edit</div>
<svg class="r" style="left:1059.50px;top:604.40px" width="7" height="7" viewBox="0 0 7 7"><path d="M1,1 L6,6 M6,1 L1,6" stroke="#d42a2a" stroke-width="2"/></svg>
<div class="t" style="left:1080.50px;top:603.16px;font-size:9.5px;color:#333;font-weight:400;letter-spacing:0px;">$0.00</div>
<div class="t" style="left:1164.60px;top:603.16px;font-size:9.5px;color:#2f78ad;font-weight:400;letter-spacing:0px;">Mary.A</div>
<div class="t" style="left:1225.70px;top:603.16px;font-size:9.5px;color:#2f78ad;font-weight:400;letter-spacing:0px;">retail</div>
<div class="t" style="left:1280.30px;top:603.16px;font-size:9.5px;color:#333;font-weight:400;letter-spacing:0px;">Lead</div>
<div class="t" style="left:1342.50px;top:603.24px;font-size:9.4px;color:#2f78ad;font-weight:400;letter-spacing:0px;">Set Inactive</div>
<div class="t" style="left:1432.40px;top:603.16px;font-size:9.5px;color:#b83232;font-weight:400;letter-spacing:-0.25px;">M3GRD</div>
<div class="r" style="left:211.00px;top:632.50px;width:11.50px;height:11.50px;border:1.6px solid #777;border-radius:1.5px;background:#fff;"></div>
<svg class="r" style="left:249.50px;top:633.00px" width="8" height="8" viewBox="0 0 8 8"><circle cx="3" cy="3" r="2.1" fill="none" stroke="#6aa38a" stroke-width="1.3"/><line x1="4.5" y1="4.5" x2="7.5" y2="7.5" stroke="#6aa38a" stroke-width="1.6"/></svg>
<div class="t" style="left:272.30px;top:630.56px;font-size:9.5px;color:#333;font-weight:400;letter-spacing:0px;">44694</div>
<div class="t" style="left:327.20px;top:630.56px;font-size:9.5px;color:#2f78ad;font-weight:400;letter-spacing:0px;">Jeff Rago</div>
<div class="t" style="left:327.20px;top:643.26px;font-size:9.5px;color:#666;font-weight:400;letter-spacing:0px;">Rago Travel Agency</div>
<div class="t" style="left:520.40px;top:630.47px;font-size:9.6px;color:#2f78ad;font-weight:400;letter-spacing:0px;">Rago_Travel@intuit.com<span style="display:inline-block;position:relative;width:13px;height:0"><svg style="position:absolute;left:2px;top:-8.5px" width="11" height="10" viewBox="0 0 11 10"><rect x="3.5" y="0.6" width="6.9" height="5.9" fill="none" stroke="#777" stroke-width="1.1"/><path d="M3.5,3.3 L0.6,3.3 L0.6,9.4 L7.3,9.4 L7.3,6.5" fill="none" stroke="#777" stroke-width="1.1"/></svg></span></div>
<div class="t" style="left:716.80px;top:630.56px;font-size:9.5px;color:#333;font-weight:400;letter-spacing:0px;">0/0</div>
<div class="t" style="left:837.00px;top:630.56px;font-size:9.5px;color:#2f78ad;font-weight:400;letter-spacing:0px;">0/0</div>
<div class="r" style="left:915.60px;top:628.70px;width:56.00px;height:18.40px;background:#fff;border:1px solid #cfcfcf;border-radius:2px;"></div>
<div class="r" style="left:949.80px;top:628.70px;width:1.00px;height:18.40px;background:#cfcfcf;"></div>
<div class="t" style="left:920.60px;top:633.96px;font-size:10.2px;color:#333;font-weight:400;letter-spacing:0px;">Login</div>
<svg class="r" style="left:956.50px;top:637.30px" width="7" height="4.0" viewBox="0 0 7 4.0"><polygon points="0,0 7,0 3.5,3.5" fill="#222"/></svg>
<svg class="r" style="left:1008.50px;top:630.80px" width="8" height="8" viewBox="0 0 8 8"><path d="M7.90,3.13 L7.90,4.87 L6.77,4.86 L6.57,5.35 L7.38,6.14 L6.14,7.38 L5.35,6.57 L4.86,6.77 L4.87,7.90 L3.13,7.90 L3.14,6.77 L2.65,6.57 L1.86,7.38 L0.62,6.14 L1.43,5.35 L1.23,4.86 L0.10,4.87 L0.10,3.13 L1.23,3.14 L1.43,2.65 L0.62,1.86 L1.86,0.62 L2.65,1.43 L3.14,1.23 L3.13,0.10 L4.87,0.10 L4.86,1.23 L5.35,1.43 L6.14,0.62 L7.38,1.86 L6.57,2.65 L6.77,3.14 Z" fill="#2f78ad"/><circle cx="4" cy="4" r="1.3" fill="#fff"/></svg>
<div class="t" style="left:1019.30px;top:630.56px;font-size:9.5px;color:#2f78ad;font-weight:400;letter-spacing:0px;">edit</div>
<svg class="r" style="left:1059.50px;top:631.80px" width="7" height="7" viewBox="0 0 7 7"><path d="M1,1 L6,6 M6,1 L1,6" stroke="#d42a2a" stroke-width="2"/></svg>
<div class="t" style="left:1080.50px;top:630.56px;font-size:9.5px;color:#333;font-weight:400;letter-spacing:0px;">$0.00</div>
<div class="t" style="left:1164.60px;top:630.56px;font-size:9.5px;color:#2f78ad;font-weight:400;letter-spacing:0px;">Mary.A</div>
<div class="t" style="left:1225.70px;top:630.56px;font-size:9.5px;color:#2f78ad;font-weight:400;letter-spacing:0px;">retail</div>
<div class="t" style="left:1280.30px;top:630.56px;font-size:9.5px;color:#333;font-weight:400;letter-spacing:0px;">Lead</div>
<div class="t" style="left:1342.50px;top:630.64px;font-size:9.4px;color:#2f78ad;font-weight:400;letter-spacing:0px;">Set Inactive</div>
<div class="t" style="left:1432.40px;top:630.56px;font-size:9.5px;color:#b83232;font-weight:400;letter-spacing:-0.25px;">M3GRD</div>
<div class="r" style="left:211.00px;top:667.90px;width:11.50px;height:11.50px;border:1.6px solid #777;border-radius:1.5px;background:#fff;"></div>
<svg class="r" style="left:249.50px;top:668.40px" width="8" height="8" viewBox="0 0 8 8"><circle cx="3" cy="3" r="2.1" fill="none" stroke="#6aa38a" stroke-width="1.3"/><line x1="4.5" y1="4.5" x2="7.5" y2="7.5" stroke="#6aa38a" stroke-width="1.6"/></svg>
<div class="t" style="left:272.30px;top:665.96px;font-size:9.5px;color:#333;font-weight:400;letter-spacing:0px;">44693</div>
<div class="t" style="left:327.20px;top:665.96px;font-size:9.5px;color:#2f78ad;font-weight:400;letter-spacing:0px;">Karen Pye</div>
<div class="t" style="left:327.20px;top:678.66px;font-size:9.5px;color:#666;font-weight:400;letter-spacing:0px;">Pye's Cakes</div>
<div class="t" style="left:520.40px;top:665.87px;font-size:9.6px;color:#2f78ad;font-weight:400;letter-spacing:0px;">pyescakes@intuit.com<span style="display:inline-block;position:relative;width:13px;height:0"><svg style="position:absolute;left:2px;top:-8.5px" width="11" height="10" viewBox="0 0 11 10"><rect x="3.5" y="0.6" width="6.9" height="5.9" fill="none" stroke="#777" stroke-width="1.1"/><path d="M3.5,3.3 L0.6,3.3 L0.6,9.4 L7.3,9.4 L7.3,6.5" fill="none" stroke="#777" stroke-width="1.1"/></svg></span></div>
<div class="t" style="left:716.80px;top:665.96px;font-size:9.5px;color:#333;font-weight:400;letter-spacing:0px;">0/0</div>
<div class="t" style="left:837.00px;top:665.96px;font-size:9.5px;color:#2f78ad;font-weight:400;letter-spacing:0px;">0/0</div>
<div class="r" style="left:915.60px;top:664.10px;width:56.00px;height:18.40px;background:#fff;border:1px solid #cfcfcf;border-radius:2px;"></div>
<div class="r" style="left:949.80px;top:664.10px;width:1.00px;height:18.40px;background:#cfcfcf;"></div>
<div class="t" style="left:920.60px;top:669.36px;font-size:10.2px;color:#333;font-weight:400;letter-spacing:0px;">Login</div>
<svg class="r" style="left:956.50px;top:672.70px" width="7" height="4.0" viewBox="0 0 7 4.0"><polygon points="0,0 7,0 3.5,3.5" fill="#222"/></svg>
<svg class="r" style="left:1008.50px;top:666.20px" width="8" height="8" viewBox="0 0 8 8"><path d="M7.90,3.13 L7.90,4.87 L6.77,4.86 L6.57,5.35 L7.38,6.14 L6.14,7.38 L5.35,6.57 L4.86,6.77 L4.87,7.90 L3.13,7.90 L3.14,6.77 L2.65,6.57 L1.86,7.38 L0.62,6.14 L1.43,5.35 L1.23,4.86 L0.10,4.87 L0.10,3.13 L1.23,3.14 L1.43,2.65 L0.62,1.86 L1.86,0.62 L2.65,1.43 L3.14,1.23 L3.13,0.10 L4.87,0.10 L4.86,1.23 L5.35,1.43 L6.14,0.62 L7.38,1.86 L6.57,2.65 L6.77,3.14 Z" fill="#2f78ad"/><circle cx="4" cy="4" r="1.3" fill="#fff"/></svg>
<div class="t" style="left:1019.30px;top:665.96px;font-size:9.5px;color:#2f78ad;font-weight:400;letter-spacing:0px;">edit</div>
<svg class="r" style="left:1059.50px;top:667.20px" width="7" height="7" viewBox="0 0 7 7"><path d="M1,1 L6,6 M6,1 L1,6" stroke="#d42a2a" stroke-width="2"/></svg>
<div class="t" style="left:1080.50px;top:665.96px;font-size:9.5px;color:#333;font-weight:400;letter-spacing:0px;">$0.00</div>
<div class="t" style="left:1164.60px;top:665.96px;font-size:9.5px;color:#2f78ad;font-weight:400;letter-spacing:0px;">Mary.A</div>
<div class="t" style="left:1225.70px;top:665.96px;font-size:9.5px;color:#2f78ad;font-weight:400;letter-spacing:0px;">retail</div>
<div class="t" style="left:1280.30px;top:665.96px;font-size:9.5px;color:#333;font-weight:400;letter-spacing:0px;">Lead</div>
<div class="t" style="left:1342.50px;top:666.04px;font-size:9.4px;color:#2f78ad;font-weight:400;letter-spacing:0px;">Set Inactive</div>
<div class="t" style="left:1432.40px;top:665.96px;font-size:9.5px;color:#b83232;font-weight:400;letter-spacing:-0.25px;">M3GRD</div>
<div class="r" style="left:211.00px;top:703.10px;width:11.50px;height:11.50px;border:1.6px solid #777;border-radius:1.5px;background:#fff;"></div>
<svg class="r" style="left:249.50px;top:703.60px" width="8" height="8" viewBox="0 0 8 8"><circle cx="3" cy="3" r="2.1" fill="none" stroke="#6aa38a" stroke-width="1.3"/><line x1="4.5" y1="4.5" x2="7.5" y2="7.5" stroke="#6aa38a" stroke-width="1.6"/></svg>
<div class="t" style="left:272.30px;top:701.16px;font-size:9.5px;color:#333;font-weight:400;letter-spacing:0px;">44692</div>
<div class="t" style="left:327.20px;top:701.16px;font-size:9.5px;color:#2f78ad;font-weight:400;letter-spacing:0px;">Kathy Paulsen</div>
<div class="t" style="left:327.20px;top:713.86px;font-size:9.5px;color:#666;font-weight:400;letter-spacing:0px;">Paulsen Medical Supplies</div>
<div class="t" style="left:520.40px;top:701.07px;font-size:9.6px;color:#2f78ad;font-weight:400;letter-spacing:0px;">Medical@intuit.com<span style="display:inline-block;position:relative;width:13px;height:0"><svg style="position:absolute;left:2px;top:-8.5px" width="11" height="10" viewBox="0 0 11 10"><rect x="3.5" y="0.6" width="6.9" height="5.9" fill="none" stroke="#777" stroke-width="1.1"/><path d="M3.5,3.3 L0.6,3.3 L0.6,9.4 L7.3,9.4 L7.3,6.5" fill="none" stroke="#777" stroke-width="1.1"/></svg></span></div>
<div class="t" style="left:716.80px;top:701.16px;font-size:9.5px;color:#333;font-weight:400;letter-spacing:0px;">0/0</div>
<div class="t" style="left:837.00px;top:701.16px;font-size:9.5px;color:#2f78ad;font-weight:400;letter-spacing:0px;">0/0</div>
<div class="r" style="left:915.60px;top:699.30px;width:56.00px;height:18.40px;background:#fff;border:1px solid #cfcfcf;border-radius:2px;"></div>
<div class="r" style="left:949.80px;top:699.30px;width:1.00px;height:18.40px;background:#cfcfcf;"></div>
<div class="t" style="left:920.60px;top:704.56px;font-size:10.2px;color:#333;font-weight:400;letter-spacing:0px;">Login</div>
<svg class="r" style="left:956.50px;top:707.90px" width="7" height="4.0" viewBox="0 0 7 4.0"><polygon points="0,0 7,0 3.5,3.5" fill="#222"/></svg>
<svg class="r" style="left:1008.50px;top:701.40px" width="8" height="8" viewBox="0 0 8 8"><path d="M7.90,3.13 L7.90,4.87 L6.77,4.86 L6.57,5.35 L7.38,6.14 L6.14,7.38 L5.35,6.57 L4.86,6.77 L4.87,7.90 L3.13,7.90 L3.14,6.77 L2.65,6.57 L1.86,7.38 L0.62,6.14 L1.43,5.35 L1.23,4.86 L0.10,4.87 L0.10,3.13 L1.23,3.14 L1.43,2.65 L0.62,1.86 L1.86,0.62 L2.65,1.43 L3.14,1.23 L3.13,0.10 L4.87,0.10 L4.86,1.23 L5.35,1.43 L6.14,0.62 L7.38,1.86 L6.57,2.65 L6.77,3.14 Z" fill="#2f78ad"/><circle cx="4" cy="4" r="1.3" fill="#fff"/></svg>
<div class="t" style="left:1019.30px;top:701.16px;font-size:9.5px;color:#2f78ad;font-weight:400;letter-spacing:0px;">edit</div>
<svg class="r" style="left:1059.50px;top:702.40px" width="7" height="7" viewBox="0 0 7 7"><path d="M1,1 L6,6 M6,1 L1,6" stroke="#d42a2a" stroke-width="2"/></svg>
<div class="t" style="left:1080.50px;top:701.16px;font-size:9.5px;color:#333;font-weight:400;letter-spacing:0px;">$0.00</div>
<div class="t" style="left:1164.60px;top:701.16px;font-size:9.5px;color:#2f78ad;font-weight:400;letter-spacing:0px;">Mary.A</div>
<div class="t" style="left:1225.70px;top:701.16px;font-size:9.5px;color:#2f78ad;font-weight:400;letter-spacing:0px;">retail</div>
<div class="t" style="left:1280.30px;top:701.16px;font-size:9.5px;color:#333;font-weight:400;letter-spacing:0px;">Lead</div>
<div class="t" style="left:1342.50px;top:701.24px;font-size:9.4px;color:#2f78ad;font-weight:400;letter-spacing:0px;">Set Inactive</div>
<div class="t" style="left:1432.40px;top:701.16px;font-size:9.5px;color:#b83232;font-weight:400;letter-spacing:-0.25px;">M3GRD</div>
<div class="r" style="left:211.00px;top:739.80px;width:11.50px;height:11.50px;border:1.6px solid #777;border-radius:1.5px;background:#fff;"></div>
<svg class="r" style="left:249.50px;top:740.30px" width="8" height="8" viewBox="0 0 8 8"><circle cx="3" cy="3" r="2.1" fill="none" stroke="#6aa38a" stroke-width="1.3"/><line x1="4.5" y1="4.5" x2="7.5" y2="7.5" stroke="#6aa38a" stroke-width="1.6"/></svg>
<div class="t" style="left:272.30px;top:737.86px;font-size:9.5px;color:#333;font-weight:400;letter-spacing:0px;">44691</div>
<div class="t" style="left:327.20px;top:737.86px;font-size:9.5px;color:#2f78ad;font-weight:400;letter-spacing:0px;">Mark Cho</div>
<div class="t" style="left:520.40px;top:737.77px;font-size:9.6px;color:#2f78ad;font-weight:400;letter-spacing:0px;">Mark@Cho.com<span style="display:inline-block;position:relative;width:13px;height:0"><svg style="position:absolute;left:2px;top:-8.5px" width="11" height="10" viewBox="0 0 11 10"><rect x="3.5" y="0.6" width="6.9" height="5.9" fill="none" stroke="#777" stroke-width="1.1"/><path d="M3.5,3.3 L0.6,3.3 L0.6,9.4 L7.3,9.4 L7.3,6.5" fill="none" stroke="#777" stroke-width="1.1"/></svg></span></div>
<div class="t" style="left:716.80px;top:737.86px;font-size:9.5px;color:#333;font-weight:400;letter-spacing:0px;">0/0</div>
<div class="t" style="left:837.00px;top:737.86px;font-size:9.5px;color:#2f78ad;font-weight:400;letter-spacing:0px;">0/0</div>
<div class="r" style="left:915.60px;top:736.00px;width:56.00px;height:18.40px;background:#fff;border:1px solid #cfcfcf;border-radius:2px;"></div>
<div class="r" style="left:949.80px;top:736.00px;width:1.00px;height:18.40px;background:#cfcfcf;"></div>
<div class="t" style="left:920.60px;top:741.26px;font-size:10.2px;color:#333;font-weight:400;letter-spacing:0px;">Login</div>
<svg class="r" style="left:956.50px;top:744.60px" width="7" height="4.0" viewBox="0 0 7 4.0"><polygon points="0,0 7,0 3.5,3.5" fill="#222"/></svg>
<svg class="r" style="left:1008.50px;top:738.10px" width="8" height="8" viewBox="0 0 8 8"><path d="M7.90,3.13 L7.90,4.87 L6.77,4.86 L6.57,5.35 L7.38,6.14 L6.14,7.38 L5.35,6.57 L4.86,6.77 L4.87,7.90 L3.13,7.90 L3.14,6.77 L2.65,6.57 L1.86,7.38 L0.62,6.14 L1.43,5.35 L1.23,4.86 L0.10,4.87 L0.10,3.13 L1.23,3.14 L1.43,2.65 L0.62,1.86 L1.86,0.62 L2.65,1.43 L3.14,1.23 L3.13,0.10 L4.87,0.10 L4.86,1.23 L5.35,1.43 L6.14,0.62 L7.38,1.86 L6.57,2.65 L6.77,3.14 Z" fill="#2f78ad"/><circle cx="4" cy="4" r="1.3" fill="#fff"/></svg>
<div class="t" style="left:1019.30px;top:737.86px;font-size:9.5px;color:#2f78ad;font-weight:400;letter-spacing:0px;">edit</div>
<svg class="r" style="left:1059.50px;top:739.10px" width="7" height="7" viewBox="0 0 7 7"><path d="M1,1 L6,6 M6,1 L1,6" stroke="#d42a2a" stroke-width="2"/></svg>
<div class="t" style="left:1080.50px;top:737.86px;font-size:9.5px;color:#333;font-weight:400;letter-spacing:0px;">$0.00</div>
<div class="t" style="left:1164.60px;top:737.86px;font-size:9.5px;color:#2f78ad;font-weight:400;letter-spacing:0px;">Mary.A</div>
<div class="t" style="left:1225.70px;top:737.86px;font-size:9.5px;color:#2f78ad;font-weight:400;letter-spacing:0px;">retail</div>
<div class="t" style="left:1280.30px;top:737.86px;font-size:9.5px;color:#333;font-weight:400;letter-spacing:0px;">Lead</div>
<div class="t" style="left:1342.50px;top:737.94px;font-size:9.4px;color:#2f78ad;font-weight:400;letter-spacing:0px;">Set Inactive</div>
<div class="t" style="left:1432.40px;top:737.86px;font-size:9.5px;color:#b83232;font-weight:400;letter-spacing:-0.25px;">M3GRD</div>
<div class="r" style="left:203.30px;top:762.60px;width:66.20px;height:24.70px;background:#fff;border:1px solid #d9d9d9;"></div>
<div class="t" style="left:215.50px;top:769.79px;font-size:11px;color:#444;font-weight:400;letter-spacing:0px;">10</div>
<svg class="r" style="left:256.50px;top:773.10px" width="8" height="4.8" viewBox="0 0 8 4.8"><polyline points="1,1 4.0,3.8 7,1" fill="none" stroke="#444" stroke-width="1.5"/></svg>
<div class="r" style="left:1179.30px;top:764.00px;width:303.30px;height:24.60px;background:#fff;border:1px solid #dddddd;"></div>
<div class="t" style="left:908.75px;width:600px;text-align:center;top:772.07px;font-size:9.6px;color:#3a70a0;font-weight:400;letter-spacing:0px;">Previous</div>
<div class="r" style="left:1237.70px;top:764.00px;width:1.00px;height:24.60px;background:#dddddd;"></div>
<div class="t" style="left:951.35px;width:600px;text-align:center;top:772.07px;font-size:9.6px;color:#3a70a0;font-weight:400;letter-spacing:0px;">1</div>
<div class="r" style="left:1264.00px;top:764.00px;width:1.00px;height:24.60px;background:#dddddd;"></div>
<div class="t" style="left:978.35px;width:600px;text-align:center;top:772.07px;font-size:9.6px;color:#b5b5b5;font-weight:400;letter-spacing:0px;">...</div>
<div class="r" style="left:1291.70px;top:764.00px;width:1.00px;height:24.60px;background:#dddddd;"></div>
<div class="t" style="left:1005.50px;width:600px;text-align:center;top:772.07px;font-size:9.6px;color:#3a70a0;font-weight:400;letter-spacing:0px;">4</div>
<div class="r" style="left:1318.30px;top:764.00px;width:1.00px;height:24.60px;background:#dddddd;"></div>
<div class="r" style="left:1318.80px;top:763.50px;width:26.40px;height:25.60px;background:#3d87c6;"></div>
<div class="t" style="left:1032.00px;width:600px;text-align:center;top:772.07px;font-size:9.6px;color:#fff;font-weight:400;letter-spacing:0px;">5</div>
<div class="r" style="left:1344.70px;top:764.00px;width:1.00px;height:24.60px;background:#dddddd;"></div>
<div class="t" style="left:1058.15px;width:600px;text-align:center;top:772.07px;font-size:9.6px;color:#3a70a0;font-weight:400;letter-spacing:0px;">6</div>
<div class="r" style="left:1370.60px;top:764.00px;width:1.00px;height:24.60px;background:#dddddd;"></div>
<div class="t" style="left:1085.30px;width:600px;text-align:center;top:772.07px;font-size:9.6px;color:#b5b5b5;font-weight:400;letter-spacing:0px;">...</div>
<div class="r" style="left:1399.00px;top:764.00px;width:1.00px;height:24.60px;background:#dddddd;"></div>
<div class="t" style="left:1120.60px;width:600px;text-align:center;top:772.07px;font-size:9.6px;color:#3a70a0;font-weight:400;letter-spacing:0px;">3526</div>
<div class="r" style="left:1441.20px;top:764.00px;width:1.00px;height:24.60px;background:#dddddd;"></div>
<div class="t" style="left:1162.15px;width:600px;text-align:center;top:772.07px;font-size:9.6px;color:#3a70a0;font-weight:400;letter-spacing:0px;">Next</div>
<div class="r" style="left:194.20px;top:823.30px;width:149.60px;height:26.10px;background:#fff;border:1px solid #d9d9d9;"></div>
<svg class="r" style="left:327.00px;top:833.50px" width="8" height="4.8" viewBox="0 0 8 4.8"><polyline points="1,1 4.0,3.8 7,1" fill="none" stroke="#444" stroke-width="1.5"/></svg>
</body></html>
